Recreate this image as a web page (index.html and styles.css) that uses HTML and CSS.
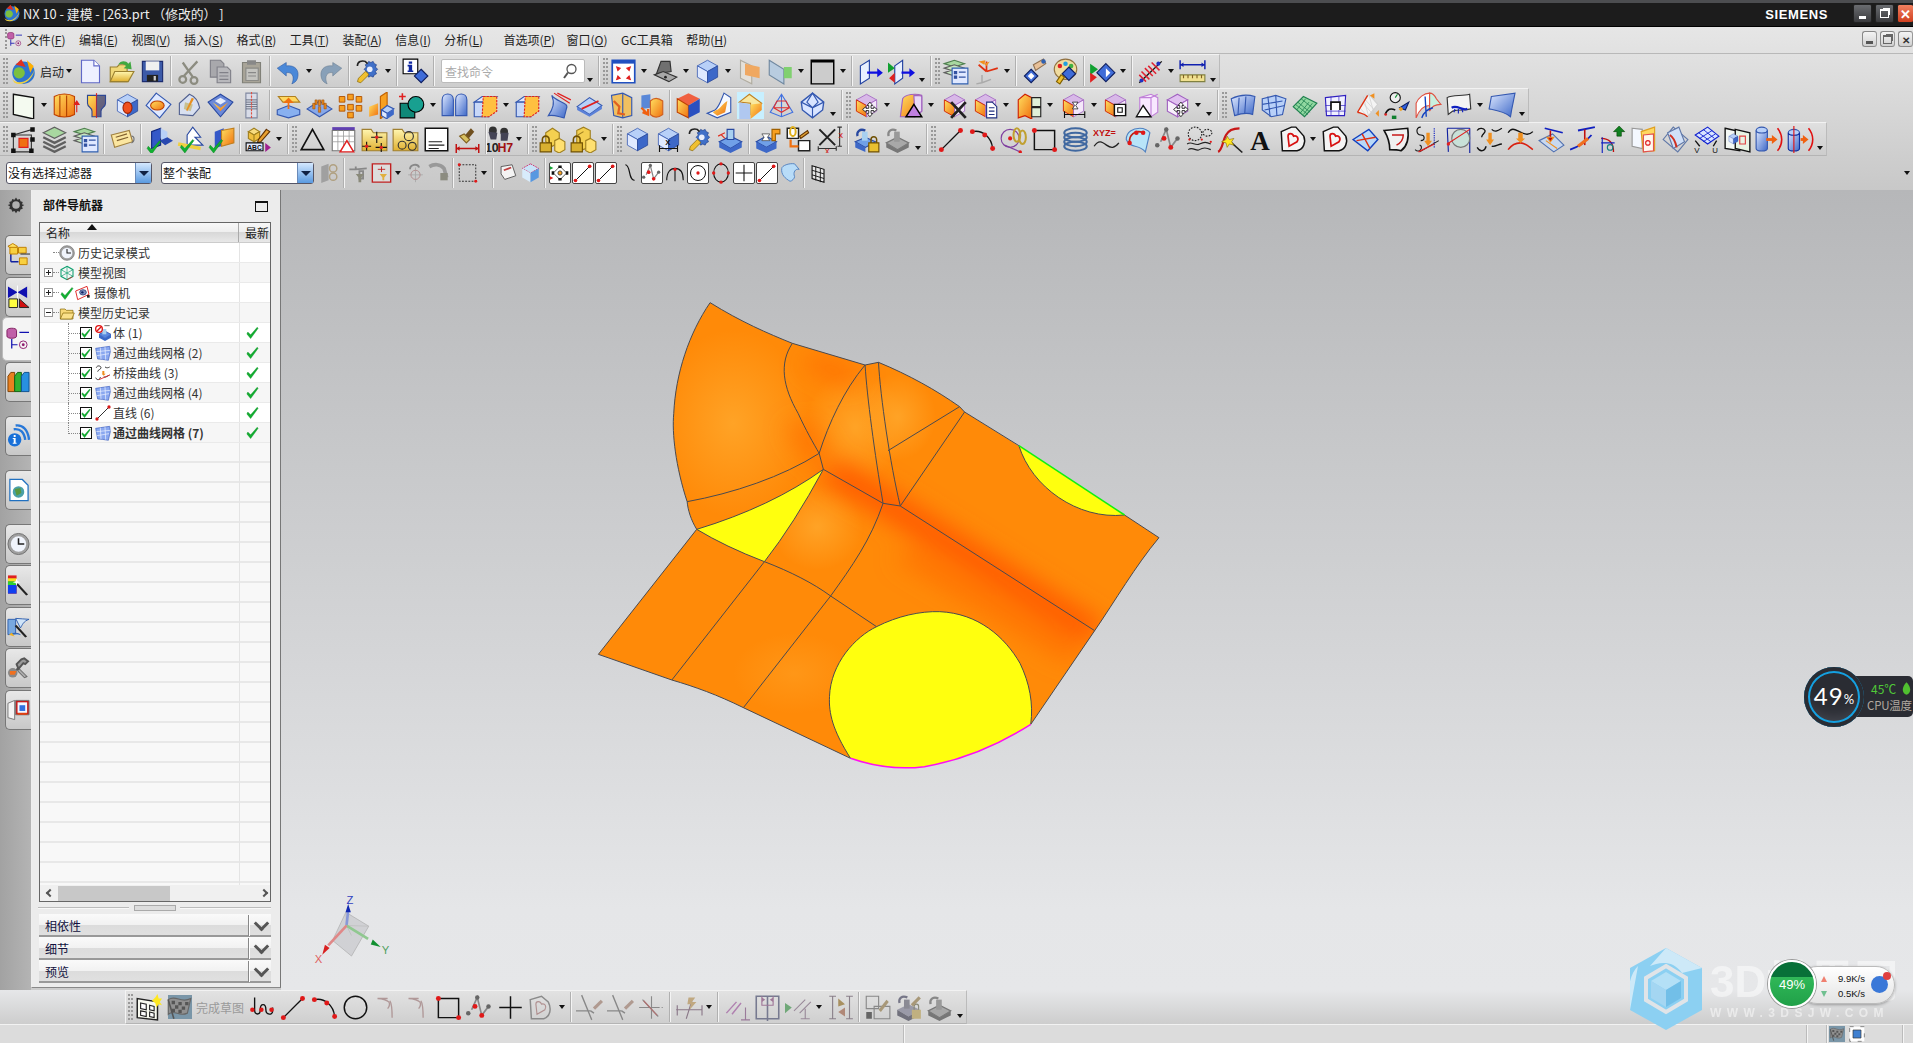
FILE: index.html
```html
<!DOCTYPE html>
<html lang="zh-CN">
<head>
<meta charset="utf-8">
<title>NX 10 - 建模</title>
<link rel="stylesheet" href="styles.css">
</head>
<body>
<svg class="defs" xmlns="http://www.w3.org/2000/svg">
<defs>
<linearGradient id="gb" x1="0" y1="0" x2="1" y2="1"><stop offset="0" stop-color="#dfe9ff"/><stop offset="1" stop-color="#3d68c8"/></linearGradient>
<linearGradient id="go" x1="0" y1="0" x2="1" y2="1"><stop offset="0" stop-color="#ffe060"/><stop offset="1" stop-color="#f07010"/></linearGradient>
<linearGradient id="gy" x1="0" y1="0" x2="0" y2="1"><stop offset="0" stop-color="#fff6b0"/><stop offset="1" stop-color="#e0b030"/></linearGradient>
<radialGradient id="fl1" cx="0.5" cy="0.5" r="0.5"><stop offset="0" stop-color="#ffa326"/><stop offset="1" stop-color="#ffa326" stop-opacity="0"/></radialGradient>
<filter id="soft" x="-30%" y="-30%" width="160%" height="160%"><feGaussianBlur stdDeviation="34"/></filter>
<g id="cb"><path d="M12 2l9 5-9 5-9-5z" fill="#b8d0f8" stroke="#3458b0" stroke-width=".7"/><path d="M3 7l9 5v10l-9-5z" fill="#dfe9ff" stroke="#3458b0" stroke-width=".7"/><path d="M21 7l-9 5v10l9-5z" fill="#3d68c8" stroke="#2a4898" stroke-width=".7"/></g>
<g id="pc"><path d="M12 2l9 5-9 5-9-5z" fill="#d8b8e8" stroke="#a060c0" stroke-width=".7"/><path d="M3 7l9 5v10l-9-5z" fill="url(#go)" stroke="#d02000" stroke-width=".8"/><path d="M21 7l-9 5v10l9-5z" fill="#f4e8fa" stroke="#a060c0" stroke-width=".7"/></g>
<path id="mv" d="M12 8l2.500 3h-1.500v2.500h2.500v-1.500l3 2.500-3 2.500v-1.500h-2.500v2.500h1.500l-2.500 3-2.500-3h1.500v-2.500h-2.500v1.500l-3-2.500 3-2.500v1.500h2.500v-2.500h-1.500z" fill="#fff" stroke="#222" stroke-width=".8"/>
<path id="ck" d="M1 6l3 3 7-8 1 1-8 11-4-5z" fill="#10b030" stroke="#0a8020" stroke-width=".4"/>
<path id="dm" d="M12 6l6 6-6 6-6-6z" fill="#3f6cd8" stroke="#102060"/>
</defs>
<symbol id="globe" viewBox="0 0 24 24"><circle cx="12" cy="13" r="10" fill="#2e74d0"/><path d="M5 9c4-2 7 0 8 3s-2 7-6 6-5-6-2-9z" fill="#7cc040"/><path d="M5 6l5-5 4 7z" fill="#e03020"/><path d="M15 2l6 5-3 6z" fill="#ffb000"/><path d="M2 19c6 5 15 3 20-9-3 12-12 15-18 12z" fill="#f0d040"/></symbol>
<symbol id="doc" viewBox="0 0 24 24"><path d="M4 2h11l5 5v15H4z" fill="#eef0ff" stroke="#6068c8"/><path d="M15 2v5h5" fill="#fff" stroke="#6068c8"/></symbol>
<symbol id="open" viewBox="0 0 24 24"><path d="M2 21V8h6l2-2h7v15z" fill="#f0d878" stroke="#9a8030"/><path d="M2 21l4-9h17l-5 9z" fill="url(#gy)" stroke="#9a8030"/><path d="M9 6c2-4 7-4 9-1l2-2 1 7-7-1 2-2c-2-2-5-2-7-1z" fill="#40a840"/></symbol>
<symbol id="save" viewBox="0 0 24 24"><path d="M3 3h18v18H3z" fill="#3c5aa8" stroke="#1c2c70"/><path d="M6 3h12v8H6z" fill="#f0f0f0"/><path d="M7 15h10v6H7z" fill="#222"/><path d="M13 16h2v4h-2z" fill="#ccc"/></symbol>
<symbol id="cut" viewBox="0 0 24 24"><g fill="none" stroke="#8c8c80" stroke-width="2"><circle cx="6" cy="19" r="3"/><circle cx="16" cy="20" r="3"/><path d="M7 16L19 3M15 17L6 4"/></g></symbol>
<symbol id="copy" viewBox="0 0 24 24"><path d="M3 2h9l3 3v12H3z" fill="#a8a8ac" stroke="#808088"/><path d="M9 8h9l3 3v11H9z" fill="#b8b8bc" stroke="#808088"/><path d="M11 13h8M11 16h8M11 19h8" stroke="#808088"/></symbol>
<symbol id="paste" viewBox="0 0 24 24"><path d="M4 4h16v18H4z" fill="#a8a498" stroke="#808078"/><path d="M8 2h8v4H8z" fill="#888"/><path d="M7 9h11v11H7z" fill="#c4c4c0" stroke="#8a8a86"/><path d="M9 13h7M9 16h7" stroke="#888"/></symbol>
<symbol id="undo" viewBox="0 0 24 24"><path d="M2 9l8-5v3c8-1 12 4 10 11-1 3-3 4-5 5 2-4 2-11-5-10v3z" fill="#4a88d8" stroke="#2a58a0" stroke-width=".5"/></symbol>
<symbol id="redo" viewBox="0 0 24 24"><path d="M22 9l-8-5v3c-8-1-12 4-10 11 1 3 3 4 5 5-2-4-2-11 5-10v3z" fill="#88a0b8" stroke="#6a7c90" stroke-width=".5"/></symbol>
<symbol id="tool" viewBox="0 0 24 24"><path d="M13 3l2 1 2-1 1 2 2 1-1 2 2 2-2 2 1 2-2 1-1 2-2-1-2 1-1-2-2-1 1-2-2-2 2-2-1-2 2-1z" fill="#4070c8" stroke="#1c3c88" stroke-width=".6"/><circle cx="14" cy="10" r="2.500" fill="#e8eefc"/><path d="M10 12l-6 6-1 3 3 1 7-7-1-2z" fill="#f0c030" stroke="#806000" stroke-width=".6"/><path d="M3 7c0-4 4-5 7-4l2 2" fill="none" stroke="#222" stroke-width="1.400"/></symbol>
<symbol id="info" viewBox="0 0 24 24"><path d="M1 1h13v13H1z" fill="#fff" stroke="#000"/><path d="M6 3h3v2H6zM5 6h4v5h1v1.500H5V11h1V7.500H5z" fill="#1028a0"/><use href="#dm" x="5" y="4"/></symbol>
<symbol id="fit" viewBox="0 0 24 24"><path d="M2 2h20v20H2z" fill="#fff" stroke="#2050c0" stroke-width="1.500"/><path d="M2 2h20v3H2z" fill="#2050c0"/><path d="M6 8l3 1-2 2zM18 8l-3 1 2 2zM6 19l3-1-2-2zM18 19l-3-1 2-2z" fill="#e02020" stroke="#e02020"/></symbol>
<symbol id="shade" viewBox="0 0 24 24"><path d="M4 14l4-11h8l1 9z" fill="#707070" stroke="#333"/><path d="M2 15l8-3 12 5-7 4z" fill="#a8a8a8" stroke="#333"/><circle cx="12" cy="17" r="1.200" fill="#222"/></symbol>
<symbol id="cube" viewBox="0 0 24 24"><use href="#cb"/></symbol>
<symbol id="pla" viewBox="0 0 24 24"><path d="M4 2l10 5v16L4 18z" fill="#e4e0d8" stroke="#b0aca0"/><path d="M8 5l13 3v10l-13-3z" fill="#f0a860"/></symbol>
<symbol id="plg" viewBox="0 0 24 24"><path d="M2 2l13 8v13L2 15z" fill="#b8cce0" stroke="#7088a0"/><path d="M15 8h7v10h-7z" fill="#80d070"/></symbol>
<symbol id="grc" viewBox="0 0 24 24"><path d="M2 2h20v21H2z" fill="#ccc" stroke="#000" stroke-width="1.300"/><path d="M2 2h20v2H2z"/></symbol>
<symbol id="plb" viewBox="0 0 24 24"><path d="M3 7l8-5v16l-8 5z" fill="#e8f0ff" stroke="#2040a0"/><path d="M9 12h9v-3l5 4-5 4v-3H9z" fill="#1010e0"/></symbol>
<symbol id="plc" viewBox="0 0 24 24"><path d="M6 7l7-5v16l-7 5z" fill="#e8f0ff" stroke="#2040a0"/><path d="M0 4l6 5-6 4z" fill="#10a030"/><path d="M6 13l-5 5 5 4z" fill="#e02020"/><path d="M12 12h7v-3l5 4-5 4v-3h-7z" fill="#1010e0"/></symbol>
<symbol id="list" viewBox="0 0 24 24"><path d="M2 5l9-3 9 3-9 3z" fill="#a8d8a0" stroke="#508050"/><path d="M2 9l9-3 9 3-9 3zM2 13l9-3 9 3-9 3z" fill="#c8e8c0" stroke="#606060"/><path d="M9 9h14v14H9z" fill="#dfe8ff" stroke="#3060b0"/><path d="M11 12h2v2h-2zM11 16h2v2h-2zM15 12.500h6M15 17h6" stroke="#3050a0" fill="#3050a0"/></symbol>
<symbol id="csys" viewBox="0 0 24 24"><path d="M12 12L12 3M12 12L22 9M12 12L5 6" stroke="#e03010" stroke-width="1.500"/><path d="M5 3l6-1-1 4zM10 5l5-2-3 4" fill="#f09020"/><path d="M8 15v7M8 22l-5 1M8 22l8-3" stroke="#aaa" stroke-width="1.300"/></symbol>
<symbol id="hand" viewBox="0 0 24 24"><path d="M11 6l9-5 2 4-9 6z" fill="#e8c098" stroke="#907050"/><circle cx="20" cy="3" r="2" fill="#3060b0"/><path d="M9 10l6 6-6 6-6-6z" fill="#3f6cd8" stroke="#102060"/><path d="M9 13l3 3-3 3-3-3z" fill="#fff"/></symbol>
<symbol id="pal" viewBox="0 0 24 24"><ellipse cx="12" cy="10" rx="10" ry="9" fill="#f0dca0" stroke="#907040"/><circle cx="7" cy="7" r="2" fill="#e02020"/><circle cx="12" cy="5" r="2" fill="#20a0e0"/><circle cx="17" cy="7" r="2" fill="#40b040"/><path d="M15 8l6 6-6 6-6-6z" fill="#3f6cd8" stroke="#102060"/><path d="M8 15l-4 6 3 2 4-6z" fill="#f0c030" stroke="#806000"/></symbol>
<symbol id="trid" viewBox="0 0 24 24"><path d="M1 5l7 5-7 5z" fill="#10a030"/><path d="M1 13l6 4-6 5z" fill="#e02020"/><path d="M15 5l8 8-8 8-8-8z" fill="#3f6cd8" stroke="#102060"/><path d="M15 9l4 4-4 4z" fill="#fff"/></symbol>
<symbol id="hat" viewBox="0 0 24 24"><path d="M2 22L22 3" stroke="#111" stroke-width="1.200"/><path d="M7 9l7 7M10 7l7 7M13 4l7 7M4 12l7 7M2 15l6 6" stroke="#e02030" stroke-width="1.300"/><circle cx="4" cy="20" r="1.800" fill="#2030c0"/><circle cx="19" cy="5" r="1.800" fill="#2030c0"/></symbol>
<symbol id="rul" viewBox="0 0 24 24"><path d="M1 6h22M1 2v8M23 2v8" stroke="#1020b0" stroke-width="1.300" fill="none"/><path d="M1 6l3-2v4zM23 6l-3-2v4z" fill="#1020b0"/><path d="M1 15h22v6H1z" fill="#f0e090" stroke="#808040"/><path d="M4 15v3M8 15v3M12 15v3M16 15v3M20 15v3" stroke="#806020"/></symbol>
<symbol id="sk" viewBox="0 0 24 24"><path d="M3 2l18 3v19L3 20z" fill="#f4faf0" stroke="#111" stroke-width="1.200"/></symbol>
<symbol id="ext" viewBox="0 0 24 24"><path d="M2 4c5-3 13-3 18 0v16c-5 3-13 3-18 0z" fill="url(#go)" stroke="#c04000"/><path d="M7 3v19M13 3v19" stroke="#b04000"/><path d="M22 18V8M22 8l-2 3h4z" stroke="#e02020" fill="#e02020"/></symbol>
<symbol id="rev" viewBox="0 0 24 24"><path d="M4 3h16v7c0 4-4 3-4 7v5h-8v-5c0-4-4-3-4-7z" fill="url(#go)" stroke="#304890"/><path d="M12 1v22" stroke="#e02020"/><path d="M12 3h8v7c0 4-4 3-4 7v5h-4z" fill="#2848a0" opacity=".7"/></symbol>
<symbol id="hole" viewBox="0 0 24 24"><use href="#cb"/><ellipse cx="12" cy="14" rx="4" ry="5" fill="#f05020" stroke="#a02000"/></symbol>
<symbol id="boss" viewBox="0 0 24 24"><path d="M10 1l13 10-10 12L1 12z" fill="#dfe9ff" stroke="#3458b0"/><ellipse cx="11" cy="12" rx="6" ry="4" fill="url(#go)" stroke="#c04000"/></symbol>
<symbol id="pock" viewBox="0 0 24 24"><path d="M3 20V10L12 2c5 2 8 7 9 12l-6 7z" fill="#d8e0f0" stroke="#506090"/><path d="M8 9l7 2-2 6-6-2z" fill="#c8c090"/><path d="M16 6l-6 11-1-1 5-11z" fill="#e89020"/></symbol>
<symbol id="pad" viewBox="0 0 24 24"><path d="M12 2l11 7-11 13L1 9z" fill="#6a88d8" stroke="#2848a0"/><path d="M5 9l7 5 7-5-7 8z" fill="url(#go)"/><path d="M7 8l5-3 5 3-5 3z" fill="#e8eefc"/></symbol>
<symbol id="thr" viewBox="0 0 24 24"><path d="M7 1h10v22H7z" fill="#d8dce8" stroke="#8088a0"/><path d="M7 7h10M7 11h10M7 15h10M7 9h10M7 13h10" stroke="#606878" stroke-width=".8"/><path d="M12 0v24" stroke="#e05040" stroke-dasharray="2 1"/></symbol>
<symbol id="dat" viewBox="0 0 24 24"><path d="M3 4h15l4 5H7z" fill="#ffd860" stroke="#b08020"/><path d="M2 16l10-4 10 4v4l-10 3-10-3z" fill="#88b0f0" stroke="#3458b0"/><path d="M12 7v8M12 6l-3 3h6z" stroke="#f07010" fill="#f07010" stroke-width="1.500"/></symbol>
<symbol id="arr" viewBox="0 0 24 24"><path d="M1 15l11-7 11 7-11 7z" fill="#88a8e8" stroke="#3458b0"/><g fill="#e88820" stroke="#a05000" stroke-width=".5"><path d="M6 10h2v5H6zM11 7h2v5h-2zM16 10h2v5h-2zM11 13h2v5h-2zM8 7h2v4H8zM14 7h2v4h-2z"/></g></symbol>
<symbol id="org" viewBox="0 0 24 24"><g fill="#f8a020" stroke="#b05000" stroke-width=".8"><path d="M2 4h5v5H2zM9.500 2h5v5h-5zM17 4h5v5h-5zM2 12h5v5H2zM9.500 11h5v5h-5zM17 12h5v5h-5zM9.500 18h5v5h-5z"/></g></symbol>
<symbol id="mir" viewBox="0 0 24 24"><path d="M11 4l6-4v18l-6 6z" fill="#f8a020" stroke="#c06000"/><path d="M1 13l8-3v10l-8 2z" fill="url(#go)"/><path d="M17 12l6 3-6 4-5-3z" fill="#b8d0f8" stroke="#3458b0"/><path d="M12 16v5l5 3v-5z" fill="#dfe9ff" stroke="#3458b0"/><path d="M23 15v5l-6 4v-5z" fill="#3d68c8"/></symbol>
<symbol id="bool" viewBox="0 0 24 24"><path d="M1 10h13v13H1z" fill="#108878" stroke="#000"/><circle cx="15" cy="11" r="7" fill="#18a090" stroke="#000"/><path d="M3 1v6M0 4h6" stroke="#e02020" stroke-width="1.400"/></symbol>
<symbol id="sew" viewBox="0 0 24 24"><path d="M1 21V7c0-7 10-7 10 0v14z" fill="url(#gb)" stroke="#3458b0"/><path d="M13 21V7c0-7 10-7 10 0v14z" fill="url(#gb)" stroke="#3458b0"/></symbol>
<symbol id="trim" viewBox="0 0 24 24"><path d="M2 9l7-5h13l-7 5z" fill="#dfe9ff" stroke="#3458b0"/><path d="M2 9h13v13H2z" fill="#c8d8f8" stroke="#3458b0"/><path d="M10 4h12v13l-7 5H9z" fill="#ffc040" stroke="#e02020" stroke-dasharray="2 1"/></symbol>
<symbol id="shee" viewBox="0 0 24 24"><path d="M6 3c4 6 16 6 13 12l-2 8c-5-1-9-3-14-2 4-6 6-11 3-18z" fill="url(#gb)" stroke="#3458b0"/><path d="M8 1l14 9M11 1l12 6" stroke="#e02020"/></symbol>
<symbol id="spl" viewBox="0 0 24 24"><path d="M1 13l11-8 11 7-11 8z" fill="#b8d0f8" stroke="#3458b0"/><path d="M1 13v3l11 6v-2zM23 12v3l-11 7v-2z" fill="#5a80d8"/><path d="M5 15L20 8" stroke="#e02020" stroke-width="1.500"/></symbol>
<symbol id="off" viewBox="0 0 24 24"><path d="M4 3l10-2 8 4v16l-8 2-8-2z" fill="#f0c060" stroke="#3458b0"/><path d="M14 1v22" stroke="#3458b0"/><path d="M6 8l5 5-1 6 6 1" fill="none" stroke="#e06020" stroke-width="2"/></symbol>
<symbol id="off2" viewBox="0 0 24 24"><path d="M3 3l8-1v12l-8 1z" fill="#5a88d8"/><path d="M11 8c3-3 7-3 11 0v12c-4 3-8 3-11 0z" fill="url(#go)" stroke="#d06020"/><path d="M3 14l6 6M4 18l5 2 0-5" stroke="#f06010" fill="none" stroke-width="2"/></symbol>
<symbol id="bl" viewBox="0 0 24 24"><path d="M12 1l10 5-10 6-10-6z" fill="#f06040"/><path d="M2 6l10 6v11L2 18z" fill="url(#go)" stroke="#c04000"/><path d="M22 6l-10 6v11l10-5z" fill="#2a50c0"/></symbol>
<symbol id="bl2" viewBox="0 0 24 24"><path d="M16 1l6 4v13l-12 5-9-4 7-3c4-3 5-8 8-15z" fill="#f4f8ff" stroke="#3458b0"/><path d="M9 16c3 0 5-5 10-8l-2 10-7 3-4-3z" fill="url(#go)"/></symbol>
<symbol id="bl3" viewBox="0 0 24 24"><path d="M0 0h24v24H0z" fill="#c8f0ff"/><path d="M2 9l9-7 11 8-10 10V10z" fill="#f8e8a0" stroke="#c08020"/><path d="M2 9l10 2v13H2z" fill="#b0c8f0"/><path d="M12 11l10-1v6l-10 8z" fill="url(#go)"/></symbol>
<symbol id="frust" viewBox="0 0 24 24"><path d="M12 2L2 18l10 4 10-4zM12 2v20" fill="none" stroke="#4070e0"/><path d="M8 8h8l3 6H5zM5 14l7 4 7-4" fill="none" stroke="#e03030"/></symbol>
<symbol id="wire" viewBox="0 0 24 24"><path d="M12 1l10 8-1 7-9 7-9-7-1-7z" fill="#d8e4ff" stroke="#3458b0" stroke-width="1.200"/><path d="M2 9l10 5 10-5M12 14v9M12 1l-5 8 5 5 5-5z" fill="none" stroke="#3458b0"/></symbol>
<symbol id="pc1" viewBox="0 0 24 24"><use href="#pc"/><use href="#mv" x="3" y="1"/></symbol>
<symbol id="pc2" viewBox="0 0 24 24"><path d="M5 6c2-4 12-5 17-3v14l-7 5H3z" fill="url(#go)" stroke="#a060c0"/><path d="M15 3c3 0 7 0 7 1v13l-6 5z" fill="#e8d8f4" stroke="#a060c0"/><path d="M15 11l7 11H8z" fill="#c080e0" stroke="#000" stroke-width="1.300"/></symbol>
<symbol id="pc3" viewBox="0 0 24 24"><use href="#pc"/><path d="M9 9l13 14M22 9L9 23" stroke="#222" stroke-width="2.500"/></symbol>
<symbol id="pc4" viewBox="0 0 24 24"><use href="#pc"/><path d="M13 9h5l4 4v10h-9z" fill="#fff" stroke="#203080"/><path d="M15 14h5M15 17h5M15 20h5" stroke="#203080"/></symbol>
<symbol id="pc5" viewBox="0 0 24 24"><path d="M2 7l6-5 6 3v19l-6-3-6 2z" fill="url(#go)" stroke="#d02000"/><path d="M14 5h8v8h-8zM14 14h8v8h-8z" fill="#dff0d8" stroke="#222"/></symbol>
<symbol id="pc6" viewBox="0 0 24 24"><use href="#pc"/><path d="M4 20h18M4 17v6M22 17v6" stroke="#111"/><path d="M11 9h5l-2 3 2 3h-5l2-3z" fill="#fff" stroke="#222" stroke-width=".7"/></symbol>
<symbol id="pc7" viewBox="0 0 24 24"><use href="#pc"/><path d="M11 11h10v10H11z" fill="#fff" stroke="#111" stroke-width="1.300"/><path d="M14 14h4v4h-4z" fill="#fff" stroke="#111"/></symbol>
<symbol id="pc8" viewBox="0 0 24 24"><path d="M6 5l10-3 6 3v13l-6 4H6z" fill="#f8e8ff" stroke="#c080d8"/><path d="M6 5h10l6-3M16 5v17" fill="none" stroke="#c080d8"/><path d="M9 12l7 10H3z" fill="#fff" stroke="#111" stroke-width="1.200"/></symbol>
<symbol id="pc9" viewBox="0 0 24 24"><path d="M12 2l9 5-9 5-9-5z" fill="#e0c0f0" stroke="#a060c0"/><path d="M3 7l9 5v10l-9-5zM21 7l-9 5v10l9-5z" fill="#f8f0fc" stroke="#a060c0"/><use href="#mv" x="3" y="1"/></symbol>
<symbol id="sf1" viewBox="0 0 24 24"><path d="M2 6c6-3 14-4 21-2l-2 16c-5-2-10-1-16 1z" fill="url(#gb)" stroke="#3458b0"/><path d="M9 5l-1 15M15 4l-1 15" stroke="#3458b0"/></symbol>
<symbol id="sf2" viewBox="0 0 24 24"><path d="M2 6l12-3 9 3-3 14-10 2-8-6z" fill="#b8d0f8" stroke="#3458b0"/><path d="M2 11l18-3M4 16l18-4M7 4l2 18M14 3l1 18" stroke="#3458b0"/></symbol>
<symbol id="sf3" viewBox="0 0 24 24"><path d="M2 13l9-9 12 6-11 12z" fill="#90d8a0" stroke="#208050"/><path d="M6 9l11 9M9 6l10 8M4 11l11 9M8 19l8-10M5 16l8-10M11 20l8-10" stroke="#208050" stroke-width=".7"/></symbol>
<symbol id="sf4" viewBox="0 0 24 24"><path d="M3 5l18-2-1 18H4z" fill="#f0f0ff" stroke="#3020c0"/><path d="M3 12h18M3 17h18M8 4v17M15 4v17" stroke="#3020c0" stroke-width=".6"/><path d="M8 16V9h8v7" fill="#fff" stroke="#111" stroke-width="1.500"/></symbol>
<symbol id="sf5" viewBox="0 0 24 24"><path d="M4 18L14 2l8 9-9 11z" fill="#f4f4f4" stroke="#d0d0d0"/><path d="M9 10l8 9M11 7l8 9M6 14l8 9M9 4l5 18M14 2l5 18" stroke="#ccc" stroke-width=".6"/><path d="M4 18L13 3M13 22c-3-3-6-3-9-4" fill="none" stroke="#e03010" stroke-width="1.200"/><path d="M15 3l4-2 0 5zM20 19l3-3 0 6z" fill="#f09020"/></symbol>
<symbol id="sf6" viewBox="0 0 24 24"><circle cx="10" cy="5" r="4.500" fill="#eee" stroke="#111"/><path d="M10 5l2-3" stroke="#109030"/><path d="M1 20c2-5 5-6 9-4" fill="none" stroke="#111" stroke-width="1.300"/><circle cx="1.500" cy="20" r="1.200" fill="#e02020"/><path d="M7 21h4v3H7z" fill="#108030"/><path d="M14 14l8-5-3 7z" fill="#3060e0" stroke="#102060"/><path d="M13 15l2-2 2 2-2 2z" fill="#f0a020"/></symbol>
<symbol id="sf7" viewBox="0 0 24 24"><path d="M1 10c2-5 7-9 12-9v11c-5 0-9 3-12 11z" fill="#fff" stroke="#e05040"/><path d="M13 1c3 0 5 3 6 5l4 5c-4 0-8 1-10 6z" fill="#c8f0e0" stroke="#e05040"/><path d="M6 23c2-5 5-8 10-9M9 4l1 18" stroke="#1040c0" fill="none" stroke-width="1.200"/></symbol>
<symbol id="sf8" viewBox="0 0 24 24"><path d="M1 5c5-3 13-1 20-3l1 13c-6 2-10 0-16 2l-4 3z" fill="#f4f4f4" stroke="#333"/><path d="M5 14c5-3 9 3 14 1" fill="none" stroke="#1020c0" stroke-width="2"/><path d="M8 15l-1 3M11 15v4M14 15l1 3" stroke="#1020c0"/></symbol>
<symbol id="sf9" viewBox="0 0 24 24"><path d="M3 4l21-3-3 15-1 6c-6-5-14-6-19-7z" fill="url(#gb)" stroke="#3458b0"/></symbol>
<symbol id="node" viewBox="0 0 24 24"><path d="M3 8h16v15H3z" fill="none" stroke="#333"/><path d="M3 8l17-5" stroke="#333"/><path d="M8 11h8v8H8z" fill="#f07010" stroke="#e02020"/><g fill="#111"><path d="M1 6h4v4H1zM18 1h4v4h-4zM18 10h4v4h-4zM1 20h4v4H1zM17 20h4v4h-4z"/></g></symbol>
<symbol id="lay" viewBox="0 0 24 24"><path d="M2 6l10-5 10 5-10 5z" fill="#a8d8a0" stroke="#606060"/><path d="M2 10l10 5 10-5M2 14l10 5 10-5M2 18l10 5 10-5" fill="none" stroke="#606060" stroke-width="2"/></symbol>
<symbol id="note" viewBox="0 0 24 24"><path d="M2 8l16-4 3 10-16 5z" fill="#fbe6a0" stroke="#a08040"/><path d="M6 10l10-3M7 13l10-3" stroke="#806030"/><path d="M20 9c3 0 3 5 0 6" fill="none" stroke="#777"/></symbol>
<symbol id="c1" viewBox="0 0 24 24"><path d="M5 5l8-3 0 15-8 3z" fill="#3458c8" stroke="#102880"/><path d="M13 2l6 3 0 8-6-2z" fill="#b8d0f8"/><path d="M12 13l7-3 5 3-7 4z" fill="#2848b0"/><use href="#ck" transform="translate(1 12)"/></symbol>
<symbol id="c2" viewBox="0 0 24 24"><path d="M9 8l5-7 7 9-5 0 7 7H9z" fill="#fff" stroke="#2848a0"/><path d="M1 16l20 4" stroke="#f0d040" stroke-width="3"/><use href="#ck" transform="translate(3 11)"/></symbol>
<symbol id="c3" viewBox="0 0 24 24"><path d="M6 5l8-3v15l-8 3z" fill="#3458c8"/><path d="M12 4l11-2v13l-11 3z" fill="url(#go)" stroke="#c08020"/><use href="#ck" transform="translate(1 11)"/></symbol>
<symbol id="tri" viewBox="0 0 24 24"><path d="M12 3L2 21h20z" fill="none" stroke="#111" stroke-width="1.500"/></symbol>
<symbol id="tbl" viewBox="0 0 24 24"><path d="M2 1h20v3H2z" fill="#6040b0"/><path d="M2 4h20v18H2z" fill="#fff" stroke="#777"/><path d="M2 9h20M2 14h20M7 4v18M12 4v18M17 4v18" stroke="#999" stroke-width=".7"/><path d="M15 13l6 10H9z" fill="#fff" stroke="#e02020" stroke-width="1.300"/></symbol>
<symbol id="fo1" viewBox="0 0 24 24"><path d="M1 22V3h8l2 3h12v16z" fill="url(#gy)" stroke="#a08030"/><path d="M14 5v10M9 10h10M5 14v8M1 18h8M18 15v8M13 19h10" stroke="#111"/><circle cx="14" cy="10" r="1.500" fill="#e02020"/><circle cx="5" cy="18" r="1.500" fill="#e02020"/><circle cx="18" cy="19" r="1.500" fill="#e02020"/></symbol>
<symbol id="fo2" viewBox="0 0 24 24"><path d="M1 22V3h8l2 3h12v16z" fill="url(#gy)" stroke="#a08030"/><circle cx="15" cy="9" r="4" fill="none" stroke="#333"/><circle cx="9" cy="17" r="3.500" fill="none" stroke="#333"/><circle cx="18" cy="18" r="3.500" fill="none" stroke="#333"/></symbol>
<symbol id="nt2" viewBox="0 0 24 24"><path d="M2 2h20v20H2z" fill="#fff" stroke="#111" stroke-width="1.300"/><path d="M5 14h12M5 17h14M5 20h9" stroke="#222"/></symbol>
<symbol id="brsh" viewBox="0 0 24 24"><path d="M15 2l3 3-5 6-3-3z" fill="#705020"/><path d="M9 7l5 5-3 3-6-6z" fill="#d8c060" stroke="#806020"/><path d="M2 20h20M2 16v8M22 16v8" stroke="#c01010" stroke-width="1.300"/><path d="M2 20l3-2v4zM22 20l-3-2v4z" fill="#c01010"/></symbol>
<symbol id="lk1" viewBox="0 0 24 24"><path d="M6 6l6-4 6 4v8l-6 4-6-4z" fill="#f4d050" stroke="#a08020"/><path d="M14 13l4-2 5 3v7l-5 3-4-2z" fill="#ffe070" stroke="#a08020"/><path d="M1 15h10v8H1z" fill="#d8b030" stroke="#705000"/><path d="M3 15v-3a3 3 0 0 1 6 0v3" fill="none" stroke="#705000" stroke-width="1.400"/></symbol>
<symbol id="lk2" viewBox="0 0 24 24"><path d="M6 4l6-3 6 3v14l-6 3-6-3z" fill="#f4d050" stroke="#a08020"/><path d="M14 13l4-2 5 3v7l-5 3-4-2z" fill="#ffe070" stroke="#a08020"/><path d="M1 15h10v8H1z" fill="#d8b030" stroke="#705000"/><path d="M3 15v-3a3 3 0 0 1 6 0v3" fill="none" stroke="#705000" stroke-width="1.400"/><path d="M12 5l-5 3" stroke="#a08020"/></symbol>
<symbol id="bo" viewBox="0 0 24 24"><path d="M2 14l10-5 10 5-10 6z" fill="#70a0e8" stroke="#2848a0"/><path d="M2 14v5l10 5v-4zM22 14v5l-10 5v-4z" fill="#3d68c8"/><path d="M9 3h6v9H9z" fill="#a8d0f0" stroke="#2848a0"/><path d="M1 9l6-3M4 8l3 3" stroke="#e03020"/></symbol>
<symbol id="cdm" viewBox="0 0 24 24"><path d="M2 14l9-5 9 5-9 5z" fill="#70a0e8" stroke="#2848a0"/><path d="M2 14v6l9 4v-5zM20 14v6l-9 4v-5z" fill="#3d68c8"/><path d="M16 3h7v4h-4v6h-3z" fill="#f8a020" stroke="#a06000"/><path d="M7 7h7l-2 3 2 3H7l2-3z" fill="#fff" stroke="#333" stroke-width=".6"/></symbol>
<symbol id="chn" viewBox="0 0 24 24"><path d="M2 2h10v9H2zM12 13h10v9H12z" fill="#fff" stroke="#222" stroke-width="1.300"/><ellipse cx="7" cy="5" rx="2.500" ry="4" fill="none" stroke="#e0b020" stroke-width="1.800"/><path d="M5 12v6h7" fill="none" stroke="#f07010" stroke-width="2"/><path d="M13 9l7-5 1 2-7 5z" fill="#e0a030" stroke="#603000"/></symbol>
<symbol id="lkg" viewBox="0 0 24 24"><path d="M2 14l9-4 9 4-9 5z" fill="#70a0e8" stroke="#2848a0"/><path d="M2 14v5l9 4v-4z" fill="#3d68c8"/><path d="M8 5h5v8H8z" fill="#a8d0f0"/><path d="M11 4C6 2 3 5 4 9" fill="none" stroke="#2848a0" stroke-width="2"/><path d="M14 15h9v8h-9z" fill="#e8c030" stroke="#705000"/><path d="M16 15v-3a2.500 2.500 0 0 1 5 0v3" fill="none" stroke="#705000" stroke-width="1.300"/></symbol>
<symbol id="gry" viewBox="0 0 24 24"><path d="M2 15l10-5 10 5-10 6z" fill="#a8a8a8" stroke="#777"/><path d="M2 15v4l10 5v-3zM22 15v4l-10 5v-3z" fill="#777"/><path d="M9 5h5v9H9z" fill="#999"/><path d="M11 4C7 2 3 4 4 9" fill="none" stroke="#888" stroke-width="2"/></symbol>
<symbol id="lin" viewBox="0 0 24 24"><path d="M3 21L20 4" stroke="#111" stroke-width="1.200"/><circle cx="3" cy="21" r="2.200" fill="#e01818"/><circle cx="20" cy="4" r="2.200" fill="#e01818"/></symbol>
<symbol id="arc" viewBox="0 0 24 24"><path d="M3 5c9-2 17 5 18 15" fill="none" stroke="#111" stroke-width="1.200"/><circle cx="3" cy="5" r="2.200" fill="#e01818"/><circle cx="14" cy="8" r="2.200" fill="#e01818"/><circle cx="21" cy="20" r="2.200" fill="#e01818"/></symbol>
<symbol id="lcc" viewBox="0 0 24 24"><circle cx="9" cy="11" r="8" fill="none" stroke="#8040a0"/><circle cx="9" cy="11" r="1.800" fill="#e01818"/><ellipse cx="15" cy="8" rx="3" ry="6" fill="none" stroke="#c0a030" stroke-width="1.800"/><ellipse cx="20" cy="10" rx="3" ry="6" fill="none" stroke="#c0a030" stroke-width="1.800"/><path d="M4 17l14 6" stroke="#8040a0"/><circle cx="18" cy="23" r="1.500" fill="#e01818"/></symbol>
<symbol id="rec" viewBox="0 0 24 24"><path d="M3 4h18v17H3z" fill="none" stroke="#111" stroke-width="1.300"/><circle cx="3" cy="4" r="2.200" fill="#e01818"/><circle cx="21" cy="21" r="2.200" fill="#e01818"/></symbol>
<symbol id="spr" viewBox="0 0 24 24"><g fill="none" stroke="#4068a0" stroke-width="1.800"><ellipse cx="12" cy="6" rx="10" ry="4"/><ellipse cx="12" cy="10" rx="10" ry="4"/><ellipse cx="12" cy="14" rx="10" ry="4"/><ellipse cx="12" cy="18" rx="10" ry="4"/></g></symbol>
<symbol id="scv" viewBox="0 0 24 24"><path d="M2 12C2 5 8 2 14 2c4 0 8 2 9 4l-4 17C12 15 6 21 2 12z" fill="#b8e4f8" stroke="#5080c0"/><path d="M5 15c-1-7 5-12 12-9" fill="none" stroke="#c02010" stroke-width="1.500"/><circle cx="5" cy="15" r="2" fill="#e01818"/><circle cx="11" cy="6" r="2" fill="#e01818"/><circle cx="17" cy="6" r="2" fill="#e01818"/></symbol>
<symbol id="spn" viewBox="0 0 24 24"><path d="M5 14L10 3l4 16 6-8" fill="none" stroke="#888" stroke-width="1.500"/><g fill="#666"><circle cx="2" cy="17" r="2"/><circle cx="10" cy="3" r="2"/><circle cx="20" cy="11" r="2"/></g><circle cx="8" cy="11" r="2.200" fill="#e01818"/><circle cx="14" cy="19" r="2.200" fill="#e01818"/></symbol>
<symbol id="dts" viewBox="0 0 24 24"><g fill="none" stroke="#222" stroke-dasharray="1.500 1.200"><circle cx="8" cy="7" r="6"/><ellipse cx="19" cy="6" rx="4" ry="3"/></g><path d="M1 16c4-3 7 2 11 0s6-2 10 0M2 21c4-3 7 2 10 0s6-2 10 0" fill="none" stroke="#222"/><g fill="#e01818"><circle cx="3" cy="12" r="1"/><circle cx="14" cy="12" r="1"/><circle cx="22" cy="14" r="1"/></g></symbol>
<symbol id="wnd" viewBox="0 0 24 24"><path d="M1 23c4-2 4-10 7-15 2-4 7-6 12-6" fill="none" stroke="#c81818" stroke-width="2"/><path d="M12 13l11 10-1 1-11-10z" fill="#222"/><path d="M9 9l2 3 4-1-2 3 2 3-4-1-2 3-1-4-4-1 4-2z" fill="#ffe820" stroke="#806000" stroke-width=".5"/></symbol>
<symbol id="hrt" viewBox="0 0 24 24"><path d="M2 5L11 1h4l7 8c2 5 0 12-6 13H3z" fill="#f4f4f4" stroke="#111" stroke-width="1.300"/><path d="M8 9c0-3 4-3 5 0 3-1 5 2 3 5l-7 4z" fill="none" stroke="#d81010" stroke-width="1.500"/></symbol>
<symbol id="srf" viewBox="0 0 24 24"><path d="M1 12l14-9 8 9-9 10z" fill="#b8d8f8" stroke="#1040c0" stroke-width="1.300"/><path d="M9 7l7 13M4 13l17-3" stroke="#e03010" stroke-width="1.300"/></symbol>
<symbol id="dsh" viewBox="0 0 24 24"><path d="M1 4l21-2c1 7 1 15-6 20-3-1-8-1-10-1 0-6-2-12-5-17z" fill="#f0f0f0" stroke="#111" stroke-width="1.400"/><path d="M8 8h10c0 4-2 7-6 9" fill="none" stroke="#c81818" stroke-width="1.300"/></symbol>
<symbol id="c4" viewBox="0 0 24 24"><path d="M6 1c-5 0-4 7 0 7s4 5 0 5" fill="none" stroke="#111"/><path d="M18 2v17" stroke="#1020c0" stroke-dasharray="1 1"/><path d="M1 21c4 4 8-3 4-4M5 23L22 13" fill="none" stroke="#222"/><path d="M11 6h3v7h2l-3.500 5-3.500-5h2z" fill="#f09020"/><path d="M4 23l14-7" stroke="#e02020"/></symbol>
<symbol id="c5" viewBox="0 0 24 24"><path d="M2 2h20M22 2v22M2 2l1 21" stroke="#1020a0" fill="none"/><circle cx="14" cy="11" r="8" fill="#c8e0d8" stroke="#777"/><path d="M2 16L22 3" stroke="#e02020"/><circle cx="3" cy="16" r="1.500" fill="#e02020"/></symbol>
<symbol id="c6" viewBox="0 0 24 24"><path d="M1 4c2-3 6-2 7 0s-3 3-3 6M14 3c3 3 6 1 9-1M1 19c3 5 7 3 8-1M14 18c3 1 6-2 9-2" fill="none" stroke="#111" stroke-width="1.200"/><path d="M11 6h3v6h2l-3.500 5-3.500-5h2z" fill="#f09020"/></symbol>
<symbol id="c7" viewBox="0 0 24 24"><path d="M1 6c3-5 6-3 10-1 4 2 8 4 12 0" fill="none" stroke="#111" stroke-width="1.200"/><path d="M1 21c3-4 7-6 11-6s7 3 11 6" fill="none" stroke="#d82010" stroke-width="1.400"/><path d="M10 6h4v5h2l-4 4-4-4h2z" fill="#f09020"/></symbol>
<symbol id="c8" viewBox="0 0 24 24"><path d="M1 13l12-6 10 10-9 6z" fill="#c8d8f0" stroke="#5070b0"/><path d="M6 2l16 4" stroke="#1020c0" stroke-width="1.600"/><path d="M11 4v8" stroke="#c01010" stroke-width="1.400"/><path d="M8 10h6l-3 4zM7 13l10 7" stroke="#f09020" fill="#c01010"/></symbol>
<symbol id="c9" viewBox="0 0 24 24"><path d="M8 4l15-3M1 21c9-3 14-7 19-13" stroke="#1020c0" fill="none" stroke-width="1.600"/><path d="M14 3v14" stroke="#c01010" stroke-width="1.400"/><path d="M7 17l9-7 2 2-9 7z" fill="#f07020"/></symbol>
<symbol id="c10" viewBox="0 0 24 24"><path d="M15 9V5h-3l5-5 5 5h-3v4z" fill="#108020" stroke="#004000" stroke-width=".5"/><path d="M1 11c6 0 11 3 11 12" fill="none" stroke="#c01010" stroke-width="1.200"/><path d="M2 10v14M1 15h12" stroke="#1020c0" fill="none"/><circle cx="9" cy="19" r="2.500" fill="none" stroke="#108080"/></symbol>
<symbol id="c11" viewBox="0 0 24 24"><path d="M1 2l9 1v17l-9-2z" fill="#f4f8ff" stroke="#999"/><path d="M9 5l12-4v21l-10 1z" fill="#ffd860" stroke="#e0a020"/><path d="M11 8l9-1v15l-9 1z" fill="#fff8f0" stroke="#e05050"/><circle cx="15" cy="15" r="2" fill="none" stroke="#e02020"/></symbol>
<symbol id="c12" viewBox="0 0 24 24"><path d="M1 12l9-11 13 11-9 11z" fill="none" stroke="#6078a8"/><path d="M5 6l10-5 5 13-10 6z" fill="#d0e0f8" stroke="#6078a8"/><path d="M7 8c3 2 5 6 6 11" stroke="#d03020" stroke-width="1.800" fill="none"/></symbol>
<symbol id="c14" viewBox="0 0 24 24"><path d="M1 2l13 3v17L1 20z" fill="#f4f8f4" stroke="#111" stroke-width="1.200"/><path d="M10 3l13 3v17l-13-3z" fill="#e8f4e4" stroke="#111" stroke-width="1.200"/><use href="#cb" transform="translate(3 6) scale(.45)"/><path d="M14 9h5v7h-5z" fill="none" stroke="#e04040"/></symbol>
<symbol id="c15" viewBox="0 0 24 24"><ellipse cx="6" cy="4" rx="5" ry="3" fill="#b8d0f8" stroke="#3458b0"/><path d="M1 4v16c0 3 10 3 10 0V4c0 3-10 3-10 0z" fill="url(#gb)" stroke="#3458b0"/><path d="M10 12h8" stroke="#f06010" stroke-width="2.500"/><path d="M15 8l5 4-5 4z" fill="#f06010"/><path d="M20 2c5 6 5 14 0 20" fill="none" stroke="#e01010" stroke-width="1.400"/></symbol>
<symbol id="c16" viewBox="0 0 24 24"><ellipse cx="7" cy="6" rx="5" ry="3" fill="#b8d0f8" stroke="#3458b0"/><path d="M2 6v14c0 3 10 3 10 0V6c0 3-10 3-10 0z" fill="url(#gb)" stroke="#1030a0"/><path d="M7 0v24" stroke="#e01010"/><path d="M13 12h3" stroke="#f06010" stroke-width="2.500"/><path d="M15 8l5 4-5 4z" fill="#f06010"/><path d="M20 2c5 6 5 14 0 20" fill="none" stroke="#e01010" stroke-width="1.400"/></symbol>
<symbol id="fct" viewBox="0 0 24 24"><path d="M4 4c5 0 9 2 10 3s1 4-1 6M4 4h9M15 6c2 3 2 11 2 15" fill="none" stroke="#b09898" stroke-width="1.200"/></symbol>
<symbol id="fts" viewBox="0 0 24 24"><path d="M2 21V4l18 3v16z" fill="#f8faf0" stroke="#222" stroke-width="1.300"/><path d="M5 8l5 1v5l-5-1zM13 10l4 1v4l-4-1zM5 15l5 1v4l-5-1zM13 16l4 1v4l-4-1z" fill="#fff" stroke="#222"/><path d="M18 3l2-3 1 4 3 0-2 3 2 3-3-1-2 3-1-4-3-2z" fill="#ffe820"/></symbol>
<symbol id="flg" viewBox="0 0 24 24"><path d="M2 5c7-5 11 4 20-1l-3 13c-8 4-11-4-17 1z" fill="#909090" stroke="#666"/><path d="M5 6h3v3H5zM11 7h3v3h-3zM17 7h3v3h-3zM8 10h3v3H8zM14 11h3v3h-3zM5 13h3v3H5zM11 14h3v3h-3z" fill="#555"/><path d="M2 5l5 17" stroke="#555" stroke-width="1.400"/></symbol>
<symbol id="pf" viewBox="0 0 24 24"><path d="M5 3v11c0 5 5 5 5 0 0-6 5-6 5 0 0 5 6 5 6 1v-3" fill="none" stroke="#111" stroke-width="1.200"/><circle cx="3" cy="14" r="2" fill="#e01818"/><circle cx="11" cy="14" r="2" fill="#e01818"/><circle cx="20" cy="14" r="2" fill="#e01818"/></symbol>
<symbol id="cir" viewBox="0 0 24 24"><circle cx="12" cy="12" r="10" fill="none" stroke="#111" stroke-width="1.300"/></symbol>
<symbol id="pts" viewBox="0 0 24 24"><path d="M2 12h20M12 2v20" stroke="#111" stroke-width="1.300"/></symbol>
<symbol id="hg" viewBox="0 0 24 24"><path d="M2 5l10-3 6 5c3 6 2 13-4 15H3z" fill="none" stroke="#8a8a8a" stroke-width="1.300"/><path d="M7 9c0-3 4-3 5 0 3-1 5 2 3 5l-7 4z" fill="none" stroke="#b09090"/></symbol>
<symbol id="q1" viewBox="0 0 24 24"><path d="M5 1l9 22M0 15h13M13 15l3 2" stroke="#888" stroke-width="1.200" fill="none"/><path d="M15 12l7-7 2 2-7 7z" fill="#b09a90"/></symbol>
<symbol id="q3" viewBox="0 0 24 24"><path d="M12 2v20M1 12h18M4 5l14 15" stroke="#8a8a8a"/><path d="M5 6l12 13" stroke="#b07070"/><path d="M15 12h8" stroke="#888" stroke-dasharray="1 2"/></symbol>
<symbol id="q4" viewBox="0 0 24 24"><path d="M1 14h23M2 10v9M24 10v9M10 22l5-16" stroke="#8a7888" fill="none"/><path d="M12 3h6l-3 4h4l-6 7 1-5h-3z" fill="#c0a880"/></symbol>
<symbol id="q5" viewBox="0 0 24 24"><path d="M3 17L12 7M8 18L16 8" stroke="#b080b0" stroke-width="1.300"/><path d="M16 23h8M20 12v11" stroke="#9a7a9a"/></symbol>
<symbol id="q6" viewBox="0 0 24 24"><path d="M2 2h20v20H2zM12 2v22" fill="none" stroke="#777a90" stroke-width="1.400"/><path d="M7 2v8h10V2" fill="none" stroke="#a07898"/><path d="M7 3l3 2-3 2zM17 3l-3 2 3 2z" fill="#a07898"/></symbol>
<symbol id="q7" viewBox="0 0 24 24"><path d="M0 8l6 4-6 5z" fill="#70a878"/><path d="M8 15L18 5M13 17L23 7M14 22h8M18 13v9" stroke="#9a8a9a"/></symbol>
<symbol id="q8" viewBox="0 0 24 24"><path d="M2 2h6M2 22h6M5 2v20M17 2h6M17 22h6M20 2v20" stroke="#8a808a"/><path d="M10 4l6 5-6 2z" fill="#a89060"/><path d="M16 12l-6 4 6 4z" fill="#b08878"/></symbol>
<symbol id="q9" viewBox="0 0 24 24"><path d="M2 2h11v11H2zM9 11h14v11H9z" fill="none" stroke="#888"/><path d="M2 16h5v6H2z" fill="#666"/><path d="M13 14l7-9 2 2-7 9z" fill="#a89878"/></symbol>
<symbol id="q10" viewBox="0 0 24 24"><path d="M2 14l10-5 10 5-10 6z" fill="#9a9aa8"/><path d="M2 14v5l10 5v-4zM22 14v5l-10 5v-4z" fill="#70707c"/><path d="M8 5h5v8H8z" fill="#8a8a94"/><path d="M11 3C6 1 3 4 4 8" fill="none" stroke="#778" stroke-width="2"/><path d="M15 14h8v8h-8z" fill="#c0b080"/><path d="M17 14v-3a2 2 0 0 1 4 0v3" fill="none" stroke="#887"/><path d="M14 9l7-7 2 2-7 7z" fill="#a89878"/></symbol>
<symbol id="rbox" viewBox="0 0 24 24"><path d="M2 2h20v20H2z" fill="#ddd" stroke="#c02020" stroke-width="1.500"/><path d="M8 8h8M12 5v6" stroke="#c02020"/><path d="M10 13h8l-3 4v3h-2v-3z" fill="#e0b040"/></symbol>
<symbol id="g1" viewBox="0 0 24 24"><path d="M3 5l8-3v18l-8 3z" fill="#a0a0a0"/><circle cx="16" cy="7" r="4" fill="none" stroke="#b0a080" stroke-width="1.600"/><circle cx="16" cy="16" r="4" fill="none" stroke="#b0a080" stroke-width="1.600"/></symbol>
<symbol id="g2" viewBox="0 0 24 24"><path d="M2 8h7v-3M9 8l12-1M13 10l4 0 0 8h-4z" fill="none" stroke="#888" stroke-width="2"/><path d="M9 13h9l-3 4v5h-3v-5z" fill="#8a8a7a"/></symbol>
<symbol id="g3" viewBox="0 0 24 24"><path d="M12 6v16M4 14h16" stroke="#aaa"/><circle cx="12" cy="14" r="5" fill="none" stroke="#b08a8a"/><path d="M6 8c0-5 8-7 10-2" fill="none" stroke="#888" stroke-width="2"/></symbol>
<symbol id="g4" viewBox="0 0 24 24"><path d="M2 5c5-3 12-3 16 2l3 10" fill="none" stroke="#999" stroke-width="4"/><path d="M14 12h8v8h-8z" fill="#8c8c80"/></symbol>
<symbol id="sel" viewBox="0 0 24 24"><path d="M3 3h18v18H3z" fill="none" stroke="#222" stroke-dasharray="2 1.500"/><circle cx="3" cy="3" r="1.600" fill="#e01818"/><circle cx="21" cy="21" r="1.600" fill="#e01818"/></symbol>
<symbol id="vb" viewBox="0 0 24 24"><path d="M5 5l12-2 4 12-12 4-4-6z" fill="#f4f4f4" stroke="#555"/><path d="M8 9l8-3" stroke="#c04040" stroke-width="2"/></symbol>
<symbol id="vc" viewBox="0 0 24 24"><path d="M12 2l9 5-9 5-9-5z" fill="#c8e4f8" stroke="#d03070" stroke-dasharray="2 1"/><path d="M3 7l9 5v10l-9-5z" fill="#d8ecfc"/><path d="M21 7l-9 5v10l9-5z" fill="#5898e0"/></symbol>
<symbol id="bnode" viewBox="0 0 24 24"><path d="M4 12l8-8 8 8-8 8z" fill="none" stroke="#333"/><circle cx="12" cy="12" r="2.500" fill="#f8a020" stroke="#333"/><g fill="#111"><path d="M10 3h4v3h-4zM19 10h3v4h-3zM10 18h4v3h-4zM2 10h3v4H2z"/></g><path d="M0 4l4 2-4 2z" fill="#10a030"/><path d="M0 16l4 2-4 2z" fill="#e01818"/></symbol>
<symbol id="cv" viewBox="0 0 24 24"><path d="M8 3c6 0 3 17 10 17" fill="none" stroke="#111" stroke-width="1.300"/></symbol>
<symbol id="ctr" viewBox="0 0 24 24"><path d="M3 20c0-9 4-13 9-13s9 4 9 13M12 7v14" fill="none" stroke="#111" stroke-width="1.200"/><circle cx="12" cy="8" r="1.800" fill="#e01818"/></symbol>
<symbol id="cc" viewBox="0 0 24 24"><circle cx="12" cy="12" r="9" fill="none" stroke="#111" stroke-width="1.200"/><circle cx="12" cy="12" r="2" fill="#e01818"/></symbol>
<symbol id="qd" viewBox="0 0 24 24"><ellipse cx="12" cy="12" rx="8" ry="10" fill="none" stroke="#111" stroke-width="1.200"/><g fill="#e01818"><circle cx="12" cy="2" r="1.800"/><circle cx="4" cy="12" r="1.800"/><circle cx="20" cy="12" r="1.800"/><circle cx="12" cy="22" r="1.800"/></g></symbol>
<symbol id="scu" viewBox="0 0 24 24"><path d="M3 7c0-3 8-6 14-5l5 6c-4-1-7 3-5 8 0 2-3 5-5 5C7 18 2 14 3 7z" fill="#b8dcf8" stroke="#5080c0"/></symbol>
<symbol id="grd" viewBox="0 0 24 24"><path d="M5 4l13 4v14L5 18z" fill="#e8e8e8" stroke="#111" stroke-width="1.200"/><path d="M9 5v15M14 7v15M5 9l13 4M5 14l13 4" stroke="#111"/></symbol>
<symbol id="gear" viewBox="0 0 24 24"><path d="M12 2l2 3 3-1 1 3 3 1-1 3 3 1-3 2 1 3-3 1-1 3-3-1-2 3-2-3-3 1-1-3-3-1 1-3-3-2 3-1-1-3 3-1 1-3 3 1z" fill="#333"/><circle cx="12" cy="12" r="5" fill="#b0b0b0"/></symbol>
<symbol id="clk" viewBox="0 0 24 24"><circle cx="12" cy="12" r="11" fill="#a0a0a0" stroke="#707070"/><circle cx="12" cy="12" r="8" fill="#f0f4fc"/><path d="M12 6v6h6" fill="none" stroke="#222" stroke-width="1.600"/></symbol>
<symbol id="mvw" viewBox="0 0 24 24"><path d="M12 2l9 5v10l-9 5-9-5V7z" fill="none" stroke="#10a070" stroke-width="1.600"/><path d="M3 7l9 5 9-5M12 12v10M3 17l9-5 9 5M12 2v10" fill="none" stroke="#10a070"/><path d="M12 22l8-4" stroke="#e02020"/></symbol>
<symbol id="cam" viewBox="0 0 24 24"><path d="M1 9l17-7 3 12-17 8z" fill="#fff" stroke="#e02020" stroke-width="1.400"/><ellipse cx="12" cy="11" rx="5" ry="4" fill="#8090c0" stroke="#102060"/><circle cx="11" cy="11" r="1.800" fill="#102060"/><path d="M18 15h4v4h-4z" fill="#222"/></symbol>
<symbol id="fld" viewBox="0 0 24 24"><path d="M2 21V6h7l2 2h10v13z" fill="#f8d878" stroke="#806000"/><path d="M2 21l4-9h17l-4 9z" fill="#fbe08a" stroke="#806000"/></symbol>
<symbol id="bod" viewBox="0 0 24 24"><path d="M6 14l9-5 9 5-9 6z" fill="#5888e0" stroke="#2848a0"/><path d="M6 14v5l9 5v-4zM24 14v5l-9 5v-4z" fill="#3868c8"/><path d="M11 6h6v8h-6z" fill="#a8d0f0"/><circle cx="6" cy="6" r="5" fill="#fff" stroke="#e01010" stroke-width="2"/><path d="M3 9l6-6" stroke="#e01010" stroke-width="2"/><path d="M14 1h8" stroke="#222"/></symbol>
<symbol id="tsf" viewBox="0 0 24 24"><path d="M1 5l21-3 1 8-3 13c-6-1-11-2-16-2z" fill="#8aa8f0" stroke="#4060c0"/><path d="M2 10l21-2M3 16l18-3M8 4l1 17M15 3l1 19" stroke="#f0f4ff"/></symbol>
<symbol id="tbr" viewBox="0 0 24 24"><path d="M2 4c1-4 7-3 7 0s-5 3-5 6M15 3c3 2 5 1 7 0M1 19c2 5 7 3 7-1M13 18c4 1 6-2 9-3" fill="none" stroke="#222" stroke-width="1.300"/><path d="M11 9h3v4h2l-3 3-3-3h1z" fill="#f09020"/><path d="M6 22L22 15" stroke="#e02020" stroke-width="1.300"/></symbol>
<symbol id="tln" viewBox="0 0 24 24"><path d="M3 21L21 3" stroke="#222" stroke-width="1.400"/><circle cx="3" cy="21" r="2.500" fill="#d81818"/><circle cx="21" cy="3" r="2.500" fill="#d81818"/></symbol>
<symbol id="tk" viewBox="0 0 16 16"><use href="#ck" transform="translate(2 1.500)"/></symbol>
<symbol id="t1" viewBox="0 0 24 24"><path d="M1 3h7M4 3v16M4 19h8" fill="none" stroke="#1020a0" stroke-width="1.500"/><path d="M6 0l5 3-5 3-5-3z" fill="#ffe060" stroke="#c08000"/><path d="M12 4h8v6h-8z" fill="#f8d040" stroke="#c08000"/><path d="M3 4h8v7H3z" fill="#f8d040" stroke="#c08000"/><path d="M13 15h8v7h-8z" fill="#f8d040" stroke="#c08000"/><path d="M14 11h10" stroke="#222"/></symbol>
<symbol id="t2" viewBox="0 0 24 24"><path d="M1 1l10 6 10-6v12l-10-6-10 6z" fill="#1010b0"/><path d="M11 0v24" stroke="#fff"/><path d="M2 14h9v9H2z" fill="#ffff40" stroke="#222"/><path d="M13 14l10 9H13z" fill="#d01010" stroke="#222"/></symbol>
<symbol id="t3" viewBox="0 0 24 24"><path d="M1 3c0-3 10-3 10 0v6c0 3-10 3-10 0z" fill="#c060a8" stroke="#802060"/><path d="M6 12v10M6 18h6M14 5h10" stroke="#1010b0" stroke-width="1.300"/><circle cx="18" cy="18" r="4" fill="none" stroke="#902070"/><circle cx="18" cy="18" r="1.500" fill="#902070"/></symbol>
<symbol id="t4" viewBox="0 0 24 24"><path d="M1 6l3-4h4v20H1z" fill="#e88020" stroke="#804000"/><path d="M8 6l3-4h4v20H8z" fill="#30b030" stroke="#106010"/><path d="M15 6l3-4h5v20h-8z" fill="#2890e0" stroke="#105090"/></symbol>
<symbol id="t5" viewBox="0 0 24 24"><circle cx="8" cy="16" r="7" fill="#1870d8"/><path d="M7 11h2v2H7zM6 14h3v5h1v1H6v-1h1v-4H6z" fill="#fff"/><path d="M7 5c7-1 11 3 12 11M9 1c8-1 13 5 14 15" fill="none" stroke="#2878d8" stroke-width="2.500"/></symbol>
<symbol id="t6" viewBox="0 0 24 24"><path d="M3 1h13l6 6v16H3z" fill="#fff" stroke="#2070c0" stroke-width="1.300"/><circle cx="12" cy="14" r="6" fill="#4aa0a8"/><path d="M8 11l6-1 1 5-5 3z" fill="#5a9840"/></symbol>
<symbol id="t7" viewBox="0 0 24 24"><path d="M1 2h9v19H1z" fill="#e02020"/><path d="M1 8h9v4H1z" fill="#30d030"/><path d="M1 5h9v3H1z" fill="#f8e020"/><path d="M1 12h9v9H1z" fill="#1040f0"/><path d="M11 10l11 12-2 1-11-12z" fill="#222"/><path d="M10 5l1 3 3 1-3 1-1 3-1-3-3-1 3-1z" fill="#fff"/></symbol>
<symbol id="t8" viewBox="0 0 24 24"><path d="M1 4l8 0v15l-8 1zM3 20c3-2 8-2 11 0" fill="#78a8e0" stroke="#3060b0"/><path d="M9 3c5 0 9 1 14 1-6 2-7 6-9 9z" fill="#d0e4f8" stroke="#3060b0"/><path d="M10 10l11 12-2 1-11-12z" fill="#222"/><path d="M2 20l3-2 3 4z" fill="#f0b020"/></symbol>
<symbol id="t9" viewBox="0 0 24 24"><path d="M10 8l5-5 3-1 4 3-3 3-2-1-5 6zM4 19l8-7" stroke="#555" stroke-width="2" fill="#999"/><circle cx="6" cy="17" r="5" fill="#888"/><path d="M3 15h7l-2 4H3z" fill="#f07020"/><path d="M13 13l8 8-3 1-7-7z" fill="#aaa" stroke="#555"/></symbol>
<symbol id="t10" viewBox="0 0 24 24"><path d="M1 5l7-3v20l-7-2z" fill="#f4f4f4" stroke="#777"/><path d="M9 2h14v15H9z" fill="#c81818" stroke="#777"/><path d="M11 4h10v11H11z" fill="#f4f8ff"/><path d="M13 7h6v6h-6z" fill="#3070e0"/><path d="M11 15h10v2H11z" fill="#e04010"/></symbol>
</svg>

<div class="app">
  <header class="titlebar">
    <svg class="tlogo"><use href="#globe"/></svg>
    <span class="ttext">NX 10 - 建模 - [263.prt （修改的） ]</span>
    <span class="siemens">SIEMENS</span>
    <div class="wbtns">
      <span class="wb"><i class="wmin"></i></span><span class="wb"><i class="wmax"></i></span><span class="wb close">✕</span>
    </div>
  </header>

  <div class="dock">
    <nav class="menubar">
      <i class="mgrip"></i>
      <svg class="mico"><use href="#t3"/></svg>
      <span>文件(<u>F</u>)</span><span>编辑(<u>E</u>)</span><span>视图(<u>V</u>)</span><span>插入(<u>S</u>)</span><span>格式(<u>R</u>)</span><span>工具(<u>T</u>)</span><span>装配(<u>A</u>)</span><span>信息(<u>I</u>)</span><span>分析(<u>L</u>)</span><span class="mfar">首选项(<u>P</u>)</span><span>窗口(<u>O</u>)</span><span>GC工具箱</span><span>帮助(<u>H</u>)</span>
      <div class="mbtns"><span class="mb"><i class="wmin dark"></i></span><span class="mb"><i class="wmax dark"></i></span><span class="mb">✕</span></div>
    </nav>

    <div class="tb w1"><i class="g"></i>
      <svg class="i"><use href="#globe"/></svg><span class="lbl">启动</span><i class="a"></i>
      <svg class="i"><use href="#doc"/></svg><svg class="i"><use href="#open"/></svg><svg class="i"><use href="#save"/></svg><i class="s"></i>
      <svg class="i"><use href="#cut"/></svg><svg class="i"><use href="#copy"/></svg><svg class="i"><use href="#paste"/></svg><i class="s"></i>
      <svg class="i"><use href="#undo"/></svg><i class="a"></i><svg class="i"><use href="#redo"/></svg><i class="s"></i>
      <svg class="i"><use href="#tool"/></svg><i class="a"></i><i class="s"></i>
      <svg class="i"><use href="#info"/></svg><i class="s"></i>
      <div class="search"><span>查找命令</span><svg class="sgl" viewBox="0 0 16 16"><circle cx="9.500" cy="6" r="4.500" fill="#fff" stroke="#555" stroke-width="1.300"/><path d="M6 9.500L2 15" stroke="#555" stroke-width="2"/></svg></div><i class="a low"></i><i class="s"></i><i class="g"></i>
      <svg class="i"><use href="#fit"/></svg><i class="a"></i><svg class="i"><use href="#shade"/></svg><i class="a"></i><svg class="i"><use href="#cube"/></svg><i class="a"></i><svg class="i"><use href="#pla"/></svg><svg class="i"><use href="#plg"/></svg><i class="a"></i><svg class="i"><use href="#grc"/></svg><i class="a"></i><i class="s"></i>
      <svg class="i"><use href="#plb"/></svg><svg class="i"><use href="#plc"/></svg><i class="a low"></i><i class="s"></i><i class="g"></i>
      <svg class="i"><use href="#list"/></svg><svg class="i"><use href="#csys"/></svg><i class="a"></i><i class="s"></i>
      <svg class="i"><use href="#hand"/></svg><svg class="i"><use href="#pal"/></svg><i class="s"></i>
      <svg class="i"><use href="#trid"/></svg><i class="a"></i><i class="s"></i>
      <svg class="i"><use href="#hat"/></svg><i class="a"></i><svg class="i"><use href="#rul"/></svg><i class="a low"></i>
    </div>

    <div class="tb w2"><i class="g"></i>
      <svg class="i"><use href="#sk"/></svg><i class="a"></i><svg class="i"><use href="#ext"/></svg><svg class="i"><use href="#rev"/></svg><svg class="i"><use href="#hole"/></svg><svg class="i"><use href="#boss"/></svg><svg class="i"><use href="#pock"/></svg><svg class="i"><use href="#pad"/></svg><svg class="i"><use href="#thr"/></svg><i class="s"></i>
      <svg class="i"><use href="#dat"/></svg><svg class="i"><use href="#arr"/></svg><svg class="i"><use href="#org"/></svg><svg class="i"><use href="#mir"/></svg><svg class="i"><use href="#bool"/></svg><i class="a"></i><svg class="i"><use href="#sew"/></svg><svg class="i"><use href="#trim"/></svg><i class="a"></i><svg class="i"><use href="#trim"/></svg><svg class="i"><use href="#shee"/></svg><svg class="i"><use href="#spl"/></svg><svg class="i"><use href="#off"/></svg><svg class="i"><use href="#off2"/></svg><i class="s"></i>
      <svg class="i"><use href="#bl"/></svg><svg class="i"><use href="#bl2"/></svg><svg class="i"><use href="#bl3"/></svg><svg class="i"><use href="#frust"/></svg><svg class="i"><use href="#wire"/></svg><i class="a low"></i><i class="s"></i><i class="g"></i>
      <svg class="i"><use href="#pc1"/></svg><i class="a2"></i><svg class="i"><use href="#pc2"/></svg><i class="a2"></i><svg class="i"><use href="#pc3"/></svg><svg class="i"><use href="#pc4"/></svg><i class="a2"></i><svg class="i"><use href="#pc5"/></svg><i class="a2"></i><svg class="i"><use href="#pc6"/></svg><i class="a"></i><svg class="i"><use href="#pc7"/></svg><svg class="i"><use href="#pc8"/></svg><svg class="i"><use href="#pc9"/></svg><i class="a"></i><i class="a low"></i><i class="s"></i><i class="g"></i>
      <svg class="i"><use href="#sf1"/></svg><svg class="i"><use href="#sf2"/></svg><svg class="i"><use href="#sf3"/></svg><svg class="i"><use href="#sf4"/></svg><svg class="i"><use href="#sf5"/></svg><svg class="i"><use href="#sf6"/></svg><svg class="i"><use href="#sf7"/></svg><svg class="i"><use href="#sf8"/></svg><i class="a"></i><svg class="i"><use href="#sf9"/></svg><i class="a low"></i>
    </div>

    <div class="tb w3"><i class="g"></i>
      <svg class="i"><use href="#node"/></svg><svg class="i"><use href="#lay"/></svg><svg class="i"><use href="#list"/></svg><i class="s"></i>
      <svg class="i"><use href="#note"/></svg><i class="s"></i>
      <svg class="i"><use href="#c1"/></svg><svg class="i"><use href="#c2"/></svg><svg class="i"><use href="#c3"/></svg><i class="s"></i>
      <svg class="i" viewBox="0 0 24 24"><path d="M3 5l5-3 5 3-5 3z" fill="#f8dc80" stroke="#a08020"/><path d="M3 5l5 3v6l-5-3zM13 5l-5 3v6l5-3z" fill="#f0c040" stroke="#a08020"/><path d="M19 3l3 2-8 9-3 1 1-3z" fill="#e8a030" stroke="#603000"/><path d="M1 15h15v7H1z" fill="#dfe8ff" stroke="#111"/><text x="2" y="21" class="abc">ABC</text><path d="M18 15l5 4-5 4z" fill="#a02090"/></svg><i class="a"></i><i class="s"></i><i class="g"></i>
      <svg class="i"><use href="#tri"/></svg><svg class="i"><use href="#tbl"/></svg><svg class="i"><use href="#fo1"/></svg><svg class="i"><use href="#fo2"/></svg><svg class="i"><use href="#nt2"/></svg><svg class="i"><use href="#brsh"/></svg><i class="s sm"></i>
      <svg class="i" viewBox="0 0 24 24"><circle cx="7" cy="4" r="3.500" fill="#333"/><circle cx="17" cy="5" r="3.500" fill="#333"/><path d="M3 5l2 7h5l1-6zM21 6l-1 7h-6l0-7z" fill="#445"/><text x="0" y="23" class="h7">10</text><text x="11" y="23" class="h7r">H7</text></svg><i class="a"></i><i class="s"></i><i class="g"></i>
      <svg class="i"><use href="#lk1"/></svg><svg class="i"><use href="#lk2"/></svg><i class="a"></i><i class="s"></i><i class="g"></i>
      <svg class="i"><use href="#cube"/></svg><svg class="i" viewBox="0 0 24 24"><use href="#cb"/><path d="M4 20h16M4 17v6M20 17v6" stroke="#111"/><text x="9" y="17" class="xs">X</text></svg><svg class="i"><use href="#tool"/></svg><svg class="i"><use href="#bo"/></svg><i class="s"></i>
      <svg class="i"><use href="#cdm"/></svg><svg class="i"><use href="#chn"/></svg><svg class="i" viewBox="0 0 24 24"><path d="M3 3l14 14M17 3L3 17" stroke="#222" stroke-width="1.800"/><path d="M2 20h16M2 18v4M18 18v4M21 1v17M19 1h4M19 18h4" stroke="#333"/><text x="20" y="11" class="xr">x</text><text x="8" y="25" class="xr">x</text></svg><i class="s"></i>
      <svg class="i"><use href="#lkg"/></svg><svg class="i"><use href="#gry"/></svg><i class="a low"></i><i class="s"></i><i class="g"></i>
      <svg class="i"><use href="#lin"/></svg><svg class="i"><use href="#arc"/></svg><svg class="i"><use href="#lcc"/></svg><svg class="i"><use href="#rec"/></svg><svg class="i"><use href="#spr"/></svg><svg class="i" viewBox="0 0 24 24"><text x="0" y="9" class="xyz">XYZ=</text><path d="M1 18c4-6 7-4 11-1s7 3 11-2" fill="none" stroke="#222" stroke-width="1.200"/></svg><svg class="i"><use href="#scv"/></svg><svg class="i"><use href="#spn"/></svg><svg class="i"><use href="#dts"/></svg><svg class="i"><use href="#wnd"/></svg><svg class="i" viewBox="0 0 24 24"><text x="2" y="21" class="aa">A</text></svg><svg class="i"><use href="#hrt"/></svg><i class="a"></i><svg class="i"><use href="#hrt"/></svg><svg class="i"><use href="#srf"/></svg><svg class="i"><use href="#dsh"/></svg><svg class="i"><use href="#c4"/></svg><svg class="i"><use href="#c5"/></svg><svg class="i"><use href="#c6"/></svg><svg class="i"><use href="#c7"/></svg><svg class="i"><use href="#c8"/></svg><svg class="i"><use href="#c9"/></svg><svg class="i"><use href="#c10"/></svg><svg class="i"><use href="#c11"/></svg><svg class="i"><use href="#c12"/></svg><svg class="i" viewBox="0 0 24 24"><path d="M2 8l11-7 10 8-10 7z" fill="#d8e4ff" stroke="#1020d0"/><path d="M5 6l11 8M9 3l10 8M6 11l11-7M9 14l11-7" stroke="#1020d0" stroke-width=".8"/><path d="M2 13l4 5M21 13l-3 5" stroke="#111" stroke-width="1.200"/><text x="1" y="24" class="vu">V</text><text x="17" y="24" class="vu">U</text></svg><svg class="i"><use href="#c14"/></svg><svg class="i"><use href="#c15"/></svg><svg class="i"><use href="#c16"/></svg><i class="a low"></i>
    </div>

    <div class="fb">
      <div class="dd d1"><span>没有选择过滤器</span><b></b></div>
      <div class="dd d2"><span>整个装配</span><b></b></div>
      <svg class="j"><use href="#g1"/></svg><i class="s"></i>
      <svg class="j"><use href="#g2"/></svg><svg class="j"><use href="#rbox"/></svg><i class="a"></i><svg class="j"><use href="#g3"/></svg><svg class="j"><use href="#g4"/></svg><i class="s"></i>
      <svg class="j"><use href="#sel"/></svg><i class="a"></i><i class="s"></i>
      <svg class="j"><use href="#vb"/></svg><svg class="j"><use href="#vc"/></svg><i class="s"></i>
      <svg class="j box"><use href="#bnode"/></svg><svg class="j box"><use href="#lin"/></svg><svg class="j box"><use href="#lin"/></svg><svg class="j nar"><use href="#cv"/></svg><svg class="j box"><use href="#spn"/></svg><svg class="j nar"><use href="#ctr"/></svg><svg class="j box"><use href="#cc"/></svg><svg class="j nar"><use href="#qd"/></svg><svg class="j box"><use href="#pts"/></svg><svg class="j box"><use href="#lin"/></svg><svg class="j nar"><use href="#scu"/></svg><i class="s"></i>
      <svg class="j"><use href="#grd"/></svg>
      <i class="a fbend"></i>
    </div>
  </div>

  <main class="main">
    <aside class="side">
      <svg class="gear"><use href="#gear"/></svg>
      <span class="tab t-a"><svg><use href="#t1"/></svg></span>
      <span class="tab"><svg><use href="#t2"/></svg></span>
      <span class="tab on"><svg><use href="#t3"/></svg></span>
      <span class="tab t-n"><svg><use href="#t4"/></svg></span>
      <span class="tab gap"><svg><use href="#t5"/></svg></span>
      <span class="tab gap"><svg><use href="#t6"/></svg></span>
      <span class="tab gap"><svg><use href="#clk"/></svg></span>
      <span class="tab"><svg><use href="#t7"/></svg></span>
      <span class="tab"><svg><use href="#t8"/></svg></span>
      <span class="tab"><svg><use href="#t9"/></svg></span>
      <span class="tab"><svg><use href="#t10"/></svg></span>
    </aside>

    <section class="panel">
      <div class="phead"><b>部件导航器</b><i class="pmax"></i></div>
      <div class="tree">
        <div class="thead"><span class="c1">名称<i class="sort"></i></span><span class="c2">最新</span></div>
        <div class="row"><i class="ex none"></i><i class="dash"></i><svg class="ti"><use href="#clk"/></svg><span>历史记录模式</span></div>
        <div class="row"><i class="ex plus"></i><i class="dash"></i><svg class="ti"><use href="#mvw"/></svg><span>模型视图</span></div>
        <div class="row"><i class="ex plus"></i><i class="dash"></i><svg class="ti"><use href="#tk"/></svg><svg class="ti"><use href="#cam"/></svg><span>摄像机</span></div>
        <div class="row"><i class="ex minus"></i><i class="dash"></i><svg class="ti"><use href="#fld"/></svg><span>模型历史记录</span></div>
        <div class="row ch"><i class="tw"></i><i class="cb"><svg><use href="#tk"/></svg></i><svg class="ti"><use href="#bod"/></svg><span>体 (1)</span><svg class="ok"><use href="#tk"/></svg></div>
        <div class="row ch"><i class="tw"></i><i class="cb"><svg><use href="#tk"/></svg></i><svg class="ti"><use href="#tsf"/></svg><span>通过曲线网格 (2)</span><svg class="ok"><use href="#tk"/></svg></div>
        <div class="row ch"><i class="tw"></i><i class="cb"><svg><use href="#tk"/></svg></i><svg class="ti"><use href="#tbr"/></svg><span>桥接曲线 (3)</span><svg class="ok"><use href="#tk"/></svg></div>
        <div class="row ch"><i class="tw"></i><i class="cb"><svg><use href="#tk"/></svg></i><svg class="ti"><use href="#tsf"/></svg><span>通过曲线网格 (4)</span><svg class="ok"><use href="#tk"/></svg></div>
        <div class="row ch"><i class="tw"></i><i class="cb"><svg><use href="#tk"/></svg></i><svg class="ti"><use href="#tln"/></svg><span>直线 (6)</span><svg class="ok"><use href="#tk"/></svg></div>
        <div class="row ch"><i class="tw end"></i><i class="cb"><svg><use href="#tk"/></svg></i><svg class="ti"><use href="#tsf"/></svg><span class="cur">通过曲线网格 (7)</span><svg class="ok"><use href="#tk"/></svg></div>
        <div class="fill"></div>
        <div class="hs"><i class="hl"></i><i class="th"></i><i class="hr"></i></div>
      </div>
      <div class="split"><i></i><b></b><i></i></div>
      <div class="acc"><span>相依性</span><i class="chev"></i></div>
      <div class="acc"><span>细节</span><i class="chev"></i></div>
      <div class="acc"><span>预览</span><i class="chev"></i></div>
    </section>

    <section class="canvas">
      <svg class="model" viewBox="0 0 1568 1500" preserveAspectRatio="none">
        <defs>
          <clipPath id="mc"><path d="M340 68C420 125 490 160 555 190L745 255L780 247C860 285 930 330 992 380L1005 396L1145 497L1423 705L1513 773C1450 860 1400 960 1345 1052L1178 1333L707 1435L427 1283C360 1245 300 1220 240 1200L48 1123L305 748C290 720 282 690 280 665C250 560 240 460 245 400C250 280 285 160 340 68Z"/></clipPath>
        </defs>
        <g clip-path="url(#mc)">
          <path d="M0 0h1568v1500H0z" fill="#ff8a08"/>
          <ellipse cx="400" cy="430" rx="200" ry="280" fill="url(#fl1)"/>
          <ellipse cx="720" cy="440" rx="130" ry="170" fill="url(#fl1)"/>
          <ellipse cx="830" cy="410" rx="100" ry="130" fill="url(#fl1)"/>
          <ellipse cx="620" cy="740" rx="120" ry="130" fill="url(#fl1)"/>
          <ellipse cx="560" cy="1180" rx="160" ry="120" fill="url(#fl1)" opacity=".5"/>
          <g filter="url(#soft)">
            <path class="fold" d="M650 570L800 670 1345 1060"/>
            <path class="fold2" d="M570 430L630 540M600 240L720 300M850 820L1300 1130"/>
          </g>
        </g>
        <path class="yel" d="M305 748Q500 680 636 568Q560 730 482 845Q380 800 305 748Z"/>
        <path class="yel" d="M1147 497L1423 705C1300 720 1180 620 1147 497Z"/>
        <path class="yel" d="M707 1435C660 1350 650 1300 652 1250C655 1150 720 1070 775 1040C830 1008 890 993 940 995C1040 1000 1110 1070 1150 1150C1175 1210 1185 1270 1178 1333C1100 1390 1000 1440 900 1460C830 1470 770 1460 707 1435Z"/>
        <path class="edge" d="M340 68C420 125 490 160 555 190L745 255L780 247C860 285 930 330 992 380L1005 396L1147 497M1423 705L1513 773C1450 860 1400 960 1345 1052L1178 1333M707 1435L427 1283C360 1245 300 1220 240 1200L48 1123L305 748C290 720 282 690 280 665C250 560 240 460 245 400C250 280 285 160 340 68"/>
        <path class="edge" d="M555 190C520 250 530 320 570 400C590 450 610 490 625 520M745 255C690 330 650 430 625 520L636 568M625 520C530 590 400 640 280 665M745 255C750 350 770 520 792 670M780 247C785 350 810 550 837 678M792 670L837 678M636 568L792 670M837 678L1345 1052M792 670C760 780 710 860 655 948M805 512L992 380M837 678L1005 396M482 845C550 875 610 910 655 948L775 1040M482 845L240 1200M655 948L427 1283"/>
        <path class="edge" d="M305 748Q500 680 636 568Q560 730 482 845Q380 800 305 748M1423 705C1300 720 1180 620 1147 497M707 1435C660 1350 650 1300 652 1250C655 1150 720 1070 775 1040C830 1008 890 993 940 995C1040 1000 1110 1070 1150 1150C1175 1210 1185 1270 1178 1333"/>
        <path class="grn" d="M1147 497L1423 705"/>
        <path class="pnk" d="M1178 1333C1100 1390 1000 1440 900 1460C830 1470 770 1460 707 1435"/>
      </svg>
      <svg class="triad" viewBox="930 100 250 220" preserveAspectRatio="none">
        <path d="M1038 155L1107 197 1055 287 998 240Z" fill="#c8c8cc" fill-opacity=".7" stroke="#aaa" stroke-width="2"/>
        <path d="M1038 155L1040 195 1107 197M1040 195L998 240M1040 195L1055 225" stroke="#bbb" stroke-width="2" fill="none"/>
        <path d="M1040 195L1045 150" stroke="#8898d8" stroke-width="8"/>
        <path d="M1045 130l8 25-16 0z" fill="#1028b0"/>
        <path d="M1040 195L1105 235" stroke="#90c890" stroke-width="8"/>
        <path d="M1143 260l-30-8 6-15z" fill="#109030"/>
        <path d="M1040 195L985 255" stroke="#e08888" stroke-width="8"/>
        <path d="M967 283l8-30 14 10z" fill="#d82020"/>
        <text x="1040" y="130" class="tz">Z</text><text x="1146" y="282" class="ty">Y</text><text x="944" y="308" class="tx">X</text>
      </svg>
      <div class="cpu">
        <div class="cpub"><span class="cpt">45℃ <svg class="leaf" viewBox="0 0 10 14"><path d="M5 0c5 5 6 12 0 14C-1 12 0 5 5 0z" fill="#50c030"/></svg></span><span class="cpl">CPU温度</span></div>
        <div class="cpuc"><span>49</span><small>%</small></div>
      </div>
    </section>
  </main>

  <footer class="bottom">
    <div class="btb">
      <i class="g"></i>
      <svg class="i"><use href="#fts"/></svg>
      <svg class="i flag"><use href="#flg"/></svg><span class="fin">完成草图</span>
      <svg class="i"><use href="#pf"/></svg><svg class="i"><use href="#lin"/></svg><svg class="i"><use href="#arc"/></svg><svg class="i"><use href="#cir"/></svg><svg class="i"><use href="#fct"/></svg><svg class="i"><use href="#fct"/></svg><svg class="i"><use href="#rec"/></svg><svg class="i"><use href="#spn"/></svg><svg class="i"><use href="#pts"/></svg><svg class="i"><use href="#hg"/></svg><i class="a"></i><i class="s"></i>
      <svg class="i"><use href="#q1"/></svg><svg class="i"><use href="#q1"/></svg><svg class="i"><use href="#q3"/></svg><i class="s"></i>
      <svg class="i"><use href="#q4"/></svg><i class="a"></i><i class="s"></i>
      <svg class="i"><use href="#q5"/></svg><svg class="i"><use href="#q6"/></svg><svg class="i"><use href="#q7"/></svg><i class="a"></i><svg class="i"><use href="#q8"/></svg><i class="s"></i>
      <svg class="i"><use href="#q9"/></svg><svg class="i"><use href="#q10"/></svg><svg class="i"><use href="#gry"/></svg><i class="a low"></i>
    </div>
  </footer>

  <footer class="status">
    <i class="st st1"></i>
    <i class="st st2"></i>
    <i class="st st3"></i>
    <svg class="sti hl2"><use href="#flg"/></svg>
    <svg class="sti" viewBox="0 0 24 24"><path d="M1 1h22v22H1z" fill="#fff" stroke="#555" stroke-dasharray="6 10"/><path d="M6 6h12v12H6z" fill="#4080d0" stroke="#333"/></svg>
    <i class="st st4"></i>
  </footer>

  <div class="wm">
    <svg class="wmh" viewBox="0 0 72 82"><path d="M36 0l36 20v42L36 82 0 62V20z" fill="#8cd0f2"/><path d="M36 0l36 20-20 5c-10-14-24-10-32-7zM0 62c-4-20 0-36 8-44z" fill="#cde9f8"/><path d="M36 18l20 12v22L36 64 16 52V30z" fill="none" stroke="#e0e4e8" stroke-width="4"/><path d="M36 24l15 9-15 9-15-9z" fill="#b4e0f6"/><path d="M21 33l15 9v17l-15-9z" fill="#a4d6f2"/><path d="M51 33l-15 9v17l15-9z" fill="#72bfe8"/></svg>
    <div class="wmt"><b>3D世界网</b><span>WWW.3DSJW.COM</span></div>
  </div>

  <div class="net">
    <div class="netp"><div class="netr"><i class="up"></i><span>9.9K/s</span></div><div class="netr"><i class="dn"></i><span>0.5K/s</span></div><i class="plus2"><b></b></i></div>
    <div class="netc"><span>49%</span></div>
  </div>
</div>
</body>
</html>
```

FILE: styles.css
```css
* { box-sizing: border-box; }
html, body { margin: 0; height: 100%; overflow: hidden; }
body { font-family: "Noto Sans CJK SC", "Noto Sans", sans-serif; font-size: 12px; color: #222; background: #ccc; }
.defs { position: absolute; width: 0; height: 0; }
i { display: block; font-style: normal; }
text { font-family: "Liberation Sans", sans-serif; }
.abc { font-size: 6px; font-weight: 700; fill: #111; }
.h7 { font-size: 11px; font-weight: 700; fill: #222; }
.h7r { font-size: 11px; font-weight: 700; fill: #a01010; }
.xs { font-size: 7px; font-weight: 700; fill: #111; }
.xr { font-size: 8px; fill: #d01010; }
.xyz { font-size: 8px; font-weight: 700; fill: #c01010; }
.aa { font-family: "Liberation Serif", serif; font-size: 24px; font-weight: 700; fill: #111; }
.vu { font-size: 7px; fill: #111; }

.app { width: 1913px; height: 1043px; display: flex; flex-direction: column; position: relative; overflow: hidden; }

/* title bar */
.titlebar { height: 27px; flex: none; background: #1c1c1c; border-top: 3px solid #4c4d50; border-bottom: 1px solid #000; display: flex; align-items: center; color: #fff; }
.tlogo { width: 18px; height: 20px; margin: -4px 0 0 3px; flex: none; }
.ttext { margin-left: 2px; margin-top: -2px; font-size: 12.800px; color: #eee; white-space: pre; }
.siemens { margin-left: auto; font-family: "Liberation Sans", sans-serif; font-weight: 700; font-size: 13px; letter-spacing: .6px; margin-right: 25px; }
.wbtns { display: flex; gap: 3px; align-self: flex-start; margin-top: 1px; }
.wb { width: 19px; height: 19px; border-radius: 2px; background: linear-gradient(#6a6c70, #3a3b3e); border: 1px solid #222; display: flex; align-items: center; justify-content: center; }
.wb.close { width: 16px; background: linear-gradient(#f08060, #d04020); border-right: 0; color: #fff; font-size: 13px; font-weight: 700; }
.wmin { width: 7px; height: 3px; background: #fff; margin-top: 7px; }
.wmin.dark { background: #555; }
.wmax { width: 9px; height: 9px; border: 1px solid #fff; border-top-width: 2px; box-shadow: 2px -2px 0 -1px #fff; }
.wmax.dark { border-color: #666; box-shadow: 2px -2px 0 -1px #666; }

/* dock */
.dock { height: 163px; flex: none; background: linear-gradient(#e6e6e6, #c8c8c8); }
.menubar { height: 27px; display: flex; align-items: center; gap: 13.400px; border-bottom: 1px solid #b8b8b8; position: relative; color: #222; padding-bottom: 2px; }
.menubar u { text-decoration: underline; }
.mgrip { width: 2px; height: 20px; margin-left: 5px; margin-right: -13px; border-left: 2px dotted #999; }
.mico { width: 15px; height: 17px; margin-right: -9px; margin-left: 0; }
.mfar { margin-left: 7px; margin-right: -2px; }
.mbtns { margin-left: auto; display: flex; gap: 3px; }
.mb { width: 15px; height: 16px; border: 1px solid #888; border-right-color: #999; border-radius: 3px; background: linear-gradient(#f4f4f4, #d0d0d0); display: flex; align-items: center; justify-content: center; color: #333; font-weight: 700; font-size: 10px; }

.tb, .btb { height: 34px; display: flex; align-items: center; width: max-content; background: linear-gradient(#e0e0e0, #cdcdcd); border-top: 1px solid #f2f2f2; border-right: 1px solid #bbb; border-bottom: 1px solid #b4b4b4; padding-left: 2px; }
.i { width: 31px; height: 27px; flex: none; }
.a, .a2 { width: 11px; height: 27px; flex: none; position: relative; }
.a2 { width: 13px; }
.a::after, .a2::after { content: ""; position: absolute; left: 2px; top: 11px; border: 3px solid transparent; border-top: 4px solid #111; border-bottom: 0; }
.a.low::after { top: 20px; }
.s { width: 6px; height: 30px; flex: none; position: relative; }
.s::after { content: ""; position: absolute; left: 2px; top: 0; bottom: 0; width: 1px; background: #b0b0b0; box-shadow: 1px 0 0 #f4f4f4; }
.s.sm { width: 0; }
.g { width: 5px; height: 26px; flex: none; margin: 0 0 0 1px; background: radial-gradient(circle at 1px 1px, #999 1px, transparent 1.200px) 0 0 / 3px 4px; }
.lbl { width: 24px; flex: none; margin-left: 1px; }
.search { width: 144px; height: 24px; margin-left: 4px; flex: none; background: #fff; border: 1px solid #bbb; border-radius: 2px; display: flex; align-items: center; justify-content: space-between; padding: 0 6px 0 3px; color: #aaa; }
.sgl { width: 16px; height: 18px; }

.fb { height: 34px; display: flex; align-items: center; padding-left: 6px; position: relative; }
.dd { height: 22px; background: #fff; border: 1px solid #556; border-radius: 3px; display: flex; justify-content: space-between; align-items: stretch; line-height: 20px; padding-left: 1px; flex: none; color: #111; }
.d1 { width: 146px; margin-right: 9px; }
.d2 { width: 153px; margin-right: 4px; }
.dd b { width: 16px; background: linear-gradient(#d4e8ff, #5a9ae0); border-left: 1px solid #6a8ab8; position: relative; }
.dd b::after { content: ""; position: absolute; left: 3px; top: 8px; border: 5px solid transparent; border-top: 5px solid #124; border-bottom: 0; }
.j { width: 23px; height: 22px; flex: none; }
.j.box { height: 22px; width: 22px; margin: 0 .5px; background: #fff; border: 1px solid #444; border-radius: 2px; }
.j.nar { width: 22px; margin: 0 .5px; }
.fbend { position: absolute; right: 0; top: 4px; }

/* main */
.main { height: 800px; flex: none; display: flex; }
.side { width: 31px; flex: none; background: linear-gradient(90deg, #a2a2a2, #b4b4b4); display: flex; flex-direction: column; align-items: flex-end; }
.gear { width: 18px; height: 18px; margin: 6px 6px 0 0; flex: none; }
.tab { width: 26.500px; height: 40px; margin-top: 1.500px; flex: none; background: linear-gradient(#e8e8e8, #c8c8c8); border: 1px solid #777; border-right: 0; border-radius: 5px 0 0 5px; display: flex; align-items: center; justify-content: center; }
.tab svg { width: 23px; height: 24px; }
.tab.t-a { margin-top: 21px; }
.tab.on { width: 29px; height: 44px; margin-top: 0; background: #f4f4f4; border-color: #bbb; }
.tab.t-n { margin-top: 1px; }
.tab.gap { margin-top: 14px; }

.panel { width: 250px; flex: none; background: #ececec; border-right: 1px solid #777; border-bottom: 1px solid #888; border-left: 1px solid #eee; display: flex; flex-direction: column; padding: 0 9px 0 7px; height: 798px; }
.phead { height: 32px; flex: none; display: flex; align-items: center; justify-content: space-between; padding: 0 0 4px 4px; color: #111; }
.phead b { font-weight: 700; }
.pmax { width: 13px; height: 11px; border: 1px solid #111; border-top-width: 2px; margin-right: 3px; margin-top: 4px; }
.tree { height: 680px; flex: none; border: 1px solid #666; background: #f7f7f7; display: flex; flex-direction: column; overflow: hidden; }
.thead { height: 20px; flex: none; background: linear-gradient(#f8f8f8 0, #eee 50%, #d8d8d8 50%, #e8e8e8); display: flex; border-bottom: 1px solid #ccc; line-height: 19px; }
.c1 { width: 199px; padding-left: 6px; border-right: 1px solid #aaa; position: relative; display: flex; }
.sort { border: 5px solid transparent; border-bottom: 6px solid #111; border-top: 0; margin: 1px 0 0 17px; height: 0; }
.c2 { padding-left: 6px; white-space: nowrap; overflow: hidden; }
.row { height: 20px; flex: none; display: flex; align-items: center; color: #333; white-space: nowrap; background: #fff; border-bottom: 1px solid #eaeaea; position: relative; padding-left: 4px; line-height: 18px; }
.row:nth-child(odd) { background: #f6f6f6; }
.row::after { content: ""; position: absolute; left: 199px; top: 0; bottom: 0; width: 1px; background: #e4e4e4; }
.row span { margin-left: 3px; }
.ex { width: 9px; height: 9px; flex: none; border: 1px solid #999; background: #fff; position: relative; }
.ex.none { border: 0; background: none; }
.plus::before, .minus::before { content: ""; position: absolute; left: 1px; right: 1px; top: 3px; height: 1px; background: #222; }
.plus::after { content: ""; position: absolute; top: 1px; bottom: 1px; left: 3px; width: 1px; background: #222; }
.dash { width: 6px; flex: none; border-top: 1px dotted #888; }
.ti { width: 16px; height: 16px; flex: none; }
.ch { padding-left: 28px; }
.ch span { margin-left: 2px; }
.tw { width: 12px; height: 20px; flex: none; border-left: 1px dotted #888; position: relative; }
.tw::after { content: ""; position: absolute; left: 0; right: 0; top: 10px; border-top: 1px dotted #888; }
.tw.end { height: 11px; align-self: flex-start; }
.cb { width: 12px; height: 12px; flex: none; border: 1px solid #111; background: #fff; margin-right: 3px; }
.cb svg { width: 100%; height: 100%; display: block; transform: scale(1.150); }
.cur { font-weight: 700; color: #333; }
.ok { position: absolute; left: 205px; top: 2px; width: 15px; height: 15px; }
.fill { flex: 1; background-image: linear-gradient(90deg, transparent 199px, #e4e4e4 199px 200px, transparent 200px), repeating-linear-gradient(#f8f8f8 0 18px, #e8e8e8 18px 20px); }
.hs { height: 16px; flex: none; background: #f0f0f0; display: flex; align-items: center; position: relative; }
.hl, .hr { width: 6px; height: 6px; border-left: 2px solid #555; border-bottom: 2px solid #555; transform: rotate(45deg); margin-left: 7px; flex: none; }
.hr { transform: rotate(225deg); margin-left: 91px; }
.th { width: 112px; height: 15px; background: #c8c8c8; margin-left: 5px; flex: none; }
.split { height: 12px; flex: none; display: flex; align-items: center; gap: 5px; }
.split i { flex: 1; border-top: 1px solid #bbb; border-bottom: 1px solid #f8f8f8; margin-left: -1px; }
.split b { width: 42px; height: 6px; background: #ddd; border: 1px solid #aaa; }
.acc { height: 23px; flex: none; background: linear-gradient(#fafafa 0, #f2f2f2 50%, #dcdcdc 52%, #e0e0e0); border-bottom: 2px solid #999; display: flex; align-items: center; padding: 1px 0 0 6px; color: #10103c; position: relative; }
.acc span { flex: 1; }
.chev { width: 23px; height: 21px; border-left: 1px solid #888; position: relative; flex: none; box-shadow: inset 1px 0 0 #fff; }
.chev::after { content: ""; position: absolute; left: 7px; top: 3px; width: 8px; height: 8px; border-right: 3px solid #555; border-bottom: 3px solid #555; transform: rotate(45deg); }

.canvas { flex: 1; position: relative; background: linear-gradient(#b6b7b9 0, #e5e6e8 90%, #e6e7e9 100%); }
.model { position: absolute; left: 299px; top: 90px; width: 600px; height: 500px; }
.edge { fill: none; stroke: #4a4a50; stroke-width: 1; vector-effect: non-scaling-stroke; }
.yel { fill: #ffff0e; }
.fold { fill: none; stroke: #ff5c00; stroke-width: 80; }
.fold2 { fill: none; stroke: #ff6e00; stroke-width: 60; opacity: .75; }
.grn { fill: none; stroke: #10f010; stroke-width: 1.500; vector-effect: non-scaling-stroke; }
.pnk { fill: none; stroke: #ff10f0; stroke-width: 1.500; vector-effect: non-scaling-stroke; }
.triad { position: absolute; left: 29px; top: 704px; width: 83px; height: 73px; }
.tz { font-size: 34px; fill: #3040c0; }
.ty { font-size: 34px; fill: #50a060; }
.tx { font-size: 34px; fill: #e06060; }

.cpu { position: absolute; left: 1523px; top: 477px; height: 60px; width: 109px; }
.cpuc { position: absolute; left: 0; top: 0; width: 60px; height: 60px; border-radius: 50%; background: #2a2c33; display: flex; align-items: center; justify-content: center; padding-bottom: 4px; box-shadow: inset 0 0 0 4px #2a2c33, inset 0 0 0 6px #14a0e0, inset 0 -18px 16px -10px #4a4c55; color: #fff; font-family: Lato, sans-serif; }
.cpuc span { font-size: 24px; letter-spacing: 1px; }
.cpuc small { font-size: 13px; margin-top: 7px; }
.cpub { position: absolute; left: 50px; top: 9px; right: 0; height: 41px; background: #2a2c33; border-radius: 0 5px 5px 0; padding: 4px 0 0 13px; display: flex; flex-direction: column; line-height: 17px; white-space: nowrap; }
.cpt { color: #50c838; font-size: 12px; padding-left: 4px; display: flex; align-items: center; gap: 6px; }
.leaf { width: 9px; height: 13px; }
.cpl { color: #b0a8a0; font-size: 11.500px; letter-spacing: -.2px; }

/* bottom */
.bottom { height: 34px; flex: none; background: linear-gradient(#e6e7e9, #cdcdcd); }
.btb { height: 34px; padding-left: 0; margin-left: 125px; border-left: 1px solid #f4f4f4; background: linear-gradient(#e2e2e2, #cfcfcf); }
.btb .g { margin-left: 2px; }
.i.flag { background: linear-gradient(#7a96a8, #7a96a8) center / 24px 24px no-repeat; }
.fin { width: 50px; flex: none; color: #9a9a9a; margin: 0 1px 0 1px; }
.status { height: 19px; flex: none; background: #dcdcdc; border-top: 1px solid #f2f2f2; position: relative; display: flex; justify-content: flex-end; align-items: center; padding-right: 48px; gap: 4px; }
.st { position: absolute; top: 0; bottom: 0; width: 1px; background: #bbb; box-shadow: 1px 0 0 #f4f4f4; }
.st1 { left: 903px; }
.st2 { left: 1806px; }
.st3 { left: 1826px; }
.st4 { left: 1902px; }
.sti { width: 16px; height: 16px; }
.hl2 { background: #7a96a8; }

.wm { position: absolute; left: 1630px; top: 948px; display: flex; gap: 8px; }
.wmh { width: 72px; height: 82px; flex: none; }
.wmt { display: flex; flex-direction: column; color: #fff; opacity: .5; font-family: "Liberation Sans", "Noto Sans CJK SC", sans-serif; margin-top: 10px; }
.wmt b { font-size: 44px; line-height: 48px; white-space: nowrap; }
.wmt span { font-size: 12px; letter-spacing: 5.400px; font-weight: 700; line-height: 12px; margin-top: 1px; white-space: nowrap; }

.net { position: absolute; left: 1768px; top: 960px; width: 127px; height: 48px; }
.netc { position: absolute; left: 0; top: 0; width: 48px; height: 48px; border-radius: 50%; border: 2px solid #fff; box-shadow: 0 0 0 1px #999; background: linear-gradient(#087038 0 34%, #30b858 34%, #20a048); color: #fff; display: flex; align-items: center; justify-content: center; font-size: 13px; font-family: "Liberation Sans", sans-serif; }
.netp { position: absolute; left: 30px; top: 6px; right: 0; height: 38px; background: linear-gradient(#fff, #e4e4e4); border: 1px solid #bbb; border-radius: 19px; padding: 4px 0 0 22px; box-shadow: 0 1px 3px rgba(0,0,0,.3); font-family: "Liberation Sans", sans-serif; font-size: 9.500px; color: #111; }
.netr { display: flex; align-items: center; height: 15px; gap: 11px; }
.up { border: 3px solid transparent; border-bottom: 6px solid #f08070; border-top: 0; }
.dn { border: 3px solid transparent; border-top: 6px solid #70c090; border-bottom: 0; }
.plus2 { position: absolute; right: 6px; top: 9px; width: 17px; height: 17px; border-radius: 50%; background: #3a78d8; }
.plus2 b { position: absolute; right: -3px; top: -4px; width: 8px; height: 8px; border-radius: 50%; background: #e04040; }
```
